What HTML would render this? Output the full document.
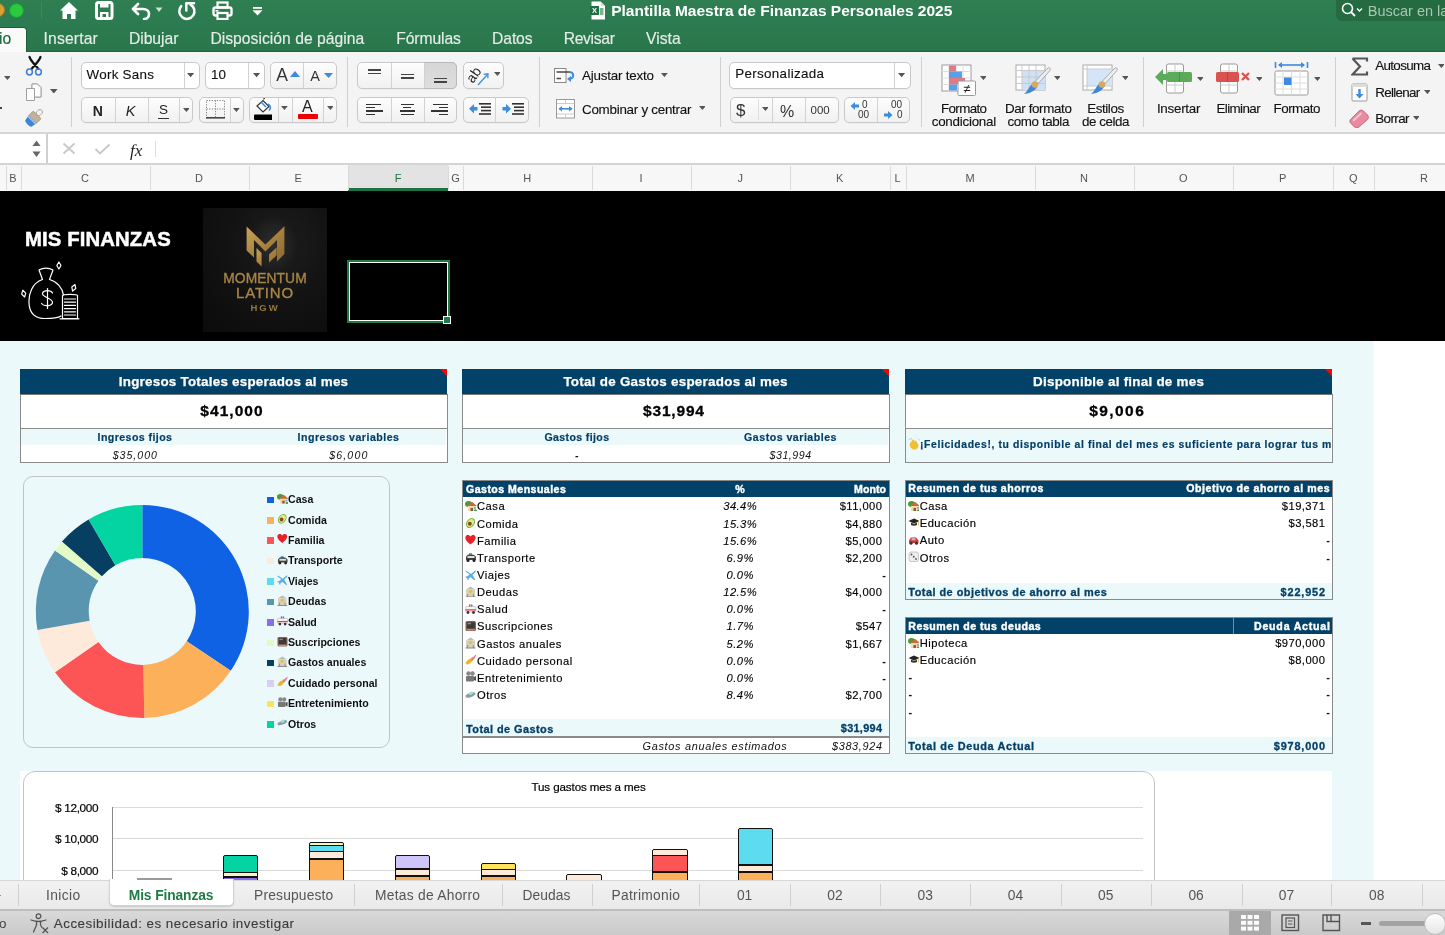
<!DOCTYPE html><html><head><meta charset="utf-8"><style>
html,body{margin:0;padding:0;}
body{width:1445px;height:935px;position:relative;overflow:hidden;background:#fff;font-family:"Liberation Sans",sans-serif;}
div{position:absolute;box-sizing:border-box;}
.t{white-space:nowrap;}
</style></head><body><div style="left:0;top:0;width:1445px;height:935px;overflow:hidden;will-change:transform">
<div style="left:0px;top:0px;width:1445px;height:52px;background:linear-gradient(#2f7f53,#2a764c);"></div>
<div style="left:0px;top:51px;width:1445px;height:1px;background:#1f643b;"></div>
<div style="left:-9px;top:3px;width:14px;height:14px;border-radius:50%;background:#d8a031;border:1px solid #b07c20"></div>
<div style="left:9px;top:3px;width:15px;height:15px;border-radius:50%;background:#2ac940;border:1px solid #1e9a30"></div>
<div style="left:41px;top:2px;width:1px;height:17px;background:#3c8a5c;"></div>
<svg style="position:absolute;left:59px;top:1px;" width="20" height="19" viewBox="0 0 20 19"><path d="M10 1 L19 9.5 L16.5 9.5 L16.5 18 L12 18 L12 13 L8 13 L8 18 L3.5 18 L3.5 9.5 L1 9.5 Z" fill="#fff"/><path d="M10 4.5 L5.5 8.7 L14.5 8.7Z" fill="#2d7b4f" opacity="0"/></svg>
<svg style="position:absolute;left:95px;top:1px;" width="19" height="19" viewBox="0 0 19 19"><rect x="1.5" y="1.5" width="15.5" height="16" rx="2" fill="none" stroke="#fff" stroke-width="3"/><rect x="5" y="1.5" width="8.5" height="5" fill="#fff"/><rect x="5" y="11" width="8.5" height="6.5" fill="#fff"/><rect x="7.5" y="13" width="3.5" height="3" fill="#2d7b4f"/></svg>
<svg style="position:absolute;left:130px;top:1px;" width="22" height="19" viewBox="0 0 22 19"><path d="M3 8 L8 3 M3 8 L8 13 M3 8 L13 8 C17 8 19 10.5 19 13 C19 16 17 18 14 18" fill="none" stroke="#fff" stroke-width="2.6" stroke-linecap="round" stroke-linejoin="round"/></svg>
<svg style="position:absolute;left:155px;top:7px;" width="8" height="6" viewBox="0 0 8 6"><path d="M0.5 0.5 L7.5 0.5 L4 5Z" fill="#d0e0d4"/></svg>
<svg style="position:absolute;left:176px;top:0px;" width="22" height="21" viewBox="0 0 22 21"><path d="M5.2 6.2 A7.6 7.6 0 1 0 14.5 4.6" fill="none" stroke="#fff" stroke-width="2.5" stroke-linecap="round"/><path d="M10.3 10.5 V3.2 H18" fill="none" stroke="#fff" stroke-width="2.5" stroke-linecap="round" stroke-linejoin="round"/></svg>
<svg style="position:absolute;left:212px;top:1px;" width="21" height="19" viewBox="0 0 21 19"><rect x="5.5" y="1.5" width="10" height="5" fill="none" stroke="#fff" stroke-width="2.2"/><rect x="1.5" y="6.5" width="18" height="8" rx="2" fill="none" stroke="#fff" stroke-width="2.4"/><rect x="5.5" y="12" width="10" height="6" fill="#2d7b4f" stroke="#fff" stroke-width="2.2"/><rect x="3.5" y="9" width="3" height="1.6" fill="#fff"/></svg>
<svg style="position:absolute;left:252px;top:6px;" width="11" height="11" viewBox="0 0 11 11"><rect x="1" y="1" width="9" height="1.8" fill="#fff"/><path d="M0.5 4.2 L10.5 4.2 L5.5 9.5Z" fill="#fff"/></svg>
<svg style="position:absolute;left:590px;top:1px;" width="16" height="19" viewBox="0 0 16 19"><path d="M1.5 0.5 L10.5 0.5 L15 5 L15 18.5 L1.5 18.5Z" fill="#fff"/><path d="M10.5 0.5 L10.5 5 L15 5" fill="#ddd"/><rect x="0" y="5" width="9" height="9" fill="#1e7145"/><text x="4.5" y="12" font-size="7.5" font-weight="bold" fill="#fff" text-anchor="middle" font-family="Liberation Sans">X</text><rect x="10" y="7" width="3.5" height="7" fill="#7bb38f"/></svg>
<div class="t" style="left:611.20px;top:3.00px;font-size:15.5px;line-height:15.5px;color:#fff;font-weight:bold;">Plantilla Maestra de Finanzas Personales 2025</div>
<div style="left:1336px;top:-6px;width:120px;height:27px;border-radius:6px;background:#256b42"></div>
<svg style="position:absolute;left:1341px;top:2px;" width="24" height="16" viewBox="0 0 24 16"><circle cx="6.5" cy="6.5" r="5" fill="none" stroke="#fff" stroke-width="1.6"/><path d="M10 10 L14 14" stroke="#fff" stroke-width="1.8"/><path d="M16 6.5 L18.5 9 L21 6.5" fill="none" stroke="#fff" stroke-width="1.3"/></svg>
<div class="t" style="left:1367.80px;top:4.00px;font-size:14.5px;line-height:14.5px;color:#a9c6b2;">Buscar en la</div>
<div style="left:-5px;top:26.5px;width:32px;height:27px;background:#fafafa;border:1px solid #1b6038;border-bottom:none;border-radius:4px 4px 0 0"></div>
<div style="left:-5px;top:52px;width:32px;height:1px;background:#f6f6f6;"></div>
<div class="t" style="left:-1.00px;top:31.00px;font-size:15.7px;line-height:15.7px;color:#1d6b3d;-webkit-text-stroke:0.15px #1d6b3d;">io</div>
<div class="t" style="left:43.50px;top:31.00px;font-size:15.7px;line-height:15.7px;color:#e4ede6;-webkit-text-stroke:0.15px #e4ede6;letter-spacing:0.154px;">Insertar</div>
<div class="t" style="left:129.00px;top:31.00px;font-size:15.7px;line-height:15.7px;color:#e4ede6;-webkit-text-stroke:0.15px #e4ede6;letter-spacing:-0.056px;">Dibujar</div>
<div class="t" style="left:210.40px;top:31.00px;font-size:15.7px;line-height:15.7px;color:#e4ede6;-webkit-text-stroke:0.15px #e4ede6;letter-spacing:0.020px;">Disposición de página</div>
<div class="t" style="left:396.20px;top:31.00px;font-size:15.7px;line-height:15.7px;color:#e4ede6;-webkit-text-stroke:0.15px #e4ede6;letter-spacing:-0.090px;">Fórmulas</div>
<div class="t" style="left:492.10px;top:31.00px;font-size:15.7px;line-height:15.7px;color:#e4ede6;-webkit-text-stroke:0.15px #e4ede6;letter-spacing:-0.128px;">Datos</div>
<div class="t" style="left:563.70px;top:31.00px;font-size:15.7px;line-height:15.7px;color:#e4ede6;-webkit-text-stroke:0.15px #e4ede6;letter-spacing:-0.320px;">Revisar</div>
<div class="t" style="left:646.00px;top:31.00px;font-size:15.7px;line-height:15.7px;color:#e4ede6;-webkit-text-stroke:0.15px #e4ede6;letter-spacing:0.020px;">Vista</div>
<div style="left:0px;top:52px;width:1445px;height:81px;background:#f4f4f4;"></div>
<div style="left:0px;top:132px;width:1445px;height:2px;background:#d6d6d6;"></div>
<svg style="position:absolute;left:3.6px;top:76.46px;" width="6.8" height="4.08" viewBox="0 0 6.8 4.08"><path d="M0 0 L6.8 0 L3.4 4.08Z" fill="#555"/></svg>
<div style="left:0px;top:107px;width:2px;height:2px;background:#444;"></div>
<svg style="position:absolute;left:24px;top:55px;" width="22" height="24" viewBox="0 0 22 24"><path d="M5.5 2 C7 6 10 9 14.5 14 M16.5 2 C15 6 12 9 7.5 14" fill="none" stroke="#111" stroke-width="2.2" stroke-linecap="round"/><circle cx="5.5" cy="17" r="2.9" fill="none" stroke="#3b7fd9" stroke-width="1.5"/><circle cx="14.5" cy="17" r="2.9" fill="none" stroke="#3b7fd9" stroke-width="1.5"/></svg>
<svg style="position:absolute;left:25px;top:83px;" width="18" height="20" viewBox="0 0 18 20"><path d="M7 1 L12.5 1 L16 4.5 L16 14 L7 14Z" fill="#fff" stroke="#a0a0a0" stroke-width="1"/><path d="M1.5 5.5 L9.5 5.5 L9.5 17.5 L1.5 17.5Z" fill="#fff" stroke="#a0a0a0" stroke-width="1"/><path d="M7 1 L12.5 1 L16 4.5 L16 14 L9.5 14 L9.5 5.5 L7 5.5Z" fill="#fff" stroke="#a0a0a0" stroke-width="1"/></svg>
<svg style="position:absolute;left:50.2px;top:88.72px;" width="7.6" height="4.56" viewBox="0 0 7.6 4.56"><path d="M0 0 L7.6 0 L3.8 4.56Z" fill="#555"/></svg>
<svg style="position:absolute;left:23px;top:108px;" width="22" height="20" viewBox="0 0 22 20"><g transform="rotate(45 11 10)"><rect x="8.5" y="-1" width="5" height="7" rx="2.5" fill="#f2f2f2" stroke="#9a9a9a" stroke-width="0.8"/><rect x="5.5" y="5.5" width="11" height="6.5" rx="1" fill="#c2b29a" stroke="#8a7a66" stroke-width="0.6"/><path d="M5.5 12 H16.5 L15.5 18 C13 19.5 9 19.5 6.5 18Z" fill="#3a86d8"/><path d="M5.5 12 H16.5 V13.8 H5.5Z" fill="#9ac0ea"/></g></svg>
<div style="left:71px;top:57px;width:1px;height:70px;background:#d0d0d0;"></div>
<div style="left:81px;top:62px;width:119px;height:27px;border:1px solid #c9c9c9;border-radius:5px;background:#fff;box-shadow:0 0.5px 0.5px rgba(0,0,0,0.06)"></div>
<div style="left:184px;top:63px;width:1px;height:25px;background:#d2d2d2;"></div>
<div class="t" style="left:86.50px;top:68.00px;font-size:13.4px;line-height:13.4px;color:#111;-webkit-text-stroke:0.12px #111;letter-spacing:0.277px;">Work Sans</div>
<svg style="position:absolute;left:187.4px;top:73.34px;" width="7.2" height="4.32" viewBox="0 0 7.2 4.32"><path d="M0 0 L7.2 0 L3.6 4.32Z" fill="#555"/></svg>
<div style="left:205px;top:62px;width:60px;height:27px;border:1px solid #c9c9c9;border-radius:5px;background:#fff;box-shadow:0 0.5px 0.5px rgba(0,0,0,0.06)"></div>
<div style="left:248px;top:63px;width:1px;height:25px;background:#d2d2d2;"></div>
<div class="t" style="left:211.00px;top:68.00px;font-size:13.4px;line-height:13.4px;color:#111;-webkit-text-stroke:0.12px #111;">10</div>
<svg style="position:absolute;left:253.4px;top:73.34px;" width="7.2" height="4.32" viewBox="0 0 7.2 4.32"><path d="M0 0 L7.2 0 L3.6 4.32Z" fill="#555"/></svg>
<div style="left:270px;top:62px;width:67px;height:27px;border:1px solid #c9c9c9;border-radius:5px;background:linear-gradient(#fdfdfd,#f1f1f1);box-shadow:0 0.5px 0.5px rgba(0,0,0,0.06)"></div>
<div style="left:303px;top:63px;width:1px;height:25px;background:#d2d2d2;"></div>
<div class="t" style="left:276.30px;top:67.00px;font-size:17.5px;line-height:17.5px;color:#333;">A</div>
<svg style="position:absolute;left:290px;top:71px;" width="10" height="6" viewBox="0 0 10 6"><path d="M0 6 L10 6 L5 0Z" fill="#3d8ae0"/></svg>
<div class="t" style="left:310.30px;top:69.00px;font-size:14.5px;line-height:14.5px;color:#333;">A</div>
<svg style="position:absolute;left:323.5px;top:73px;" width="9" height="5" viewBox="0 0 9 5"><path d="M0 0 L9 0 L4.5 5Z" fill="#3d8ae0"/></svg>
<div style="left:81px;top:97px;width:112px;height:26px;border:1px solid #c9c9c9;border-radius:5px;background:linear-gradient(#fdfdfd,#f1f1f1);box-shadow:0 0.5px 0.5px rgba(0,0,0,0.06)"></div>
<div style="left:114.5px;top:98px;width:1px;height:24px;background:#d2d2d2;"></div>
<div style="left:147.5px;top:98px;width:1px;height:24px;background:#d2d2d2;"></div>
<div style="left:179px;top:98px;width:1px;height:24px;background:#d2d2d2;"></div>
<div class="t" style="left:92.64px;top:104.00px;font-size:14px;line-height:14px;color:#222;font-weight:bold;">N</div>
<div class="t" style="left:125.66px;top:104.00px;font-size:14.5px;line-height:14.5px;color:#222;font-style:italic;">K</div>
<div class="t" style="left:159.00px;top:103.00px;font-size:13.5px;line-height:13.5px;color:#222;">S</div>
<div style="left:158px;top:117.5px;width:11px;height:1.5px;background:#333;"></div>
<svg style="position:absolute;left:182.6px;top:108.46px;" width="6.8" height="4.08" viewBox="0 0 6.8 4.08"><path d="M0 0 L6.8 0 L3.4 4.08Z" fill="#555"/></svg>
<div style="left:198.5px;top:96.5px;width:45.0px;height:26.0px;border:1px solid #c9c9c9;border-radius:5px;background:linear-gradient(#fdfdfd,#f1f1f1);box-shadow:0 0.5px 0.5px rgba(0,0,0,0.06)"></div>
<div style="left:229.5px;top:97.5px;width:1px;height:24.0px;background:#d2d2d2;"></div>
<svg style="position:absolute;left:205px;top:99px;" width="21" height="21" viewBox="0 0 21 21"><g stroke="#888" stroke-width="1" stroke-dasharray="1.3 1.3" fill="none"><rect x="1.5" y="1.5" width="18" height="17"/><path d="M10.5 1.5 V18.5 M1.5 10 H19.5"/></g><rect x="1" y="18" width="19" height="1.6" fill="#444"/></svg>
<svg style="position:absolute;left:233.1px;top:108.46px;" width="6.8" height="4.08" viewBox="0 0 6.8 4.08"><path d="M0 0 L6.8 0 L3.4 4.08Z" fill="#555"/></svg>
<div style="left:249px;top:96.5px;width:88px;height:26.0px;border:1px solid #c9c9c9;border-radius:5px;background:linear-gradient(#fdfdfd,#f1f1f1);box-shadow:0 0.5px 0.5px rgba(0,0,0,0.06)"></div>
<div style="left:278px;top:97.5px;width:1px;height:24.0px;background:#d2d2d2;"></div>
<div style="left:291.5px;top:97.5px;width:1px;height:24.0px;background:#d2d2d2;"></div>
<div style="left:323px;top:97.5px;width:1px;height:24.0px;background:#d2d2d2;"></div>
<svg style="position:absolute;left:254px;top:98px;" width="18" height="22" viewBox="0 0 18 22"><path d="M3 8 L9 2.5 L15 8.5 L9 14Z" fill="#fff" stroke="#333" stroke-width="1.2"/><path d="M7 4 L12 9" stroke="#3b8de0" stroke-width="1.6"/><path d="M14 6 C17 8 17 11 15 12.5" fill="none" stroke="#3b8de0" stroke-width="1.6"/><path d="M9 1 L11 0.5" stroke="#333" stroke-width="1"/><rect x="0" y="16.5" width="20" height="5.5" rx="1" fill="#000"/></svg>
<svg style="position:absolute;left:281.1px;top:106.46px;" width="6.8" height="4.08" viewBox="0 0 6.8 4.08"><path d="M0 0 L6.8 0 L3.4 4.08Z" fill="#555"/></svg>
<div class="t" style="left:302.00px;top:99.00px;font-size:16px;line-height:16px;color:#222;">A</div>
<div style="left:297.7px;top:114.3px;width:20.3px;height:5px;background:#ee0000;border-radius:1px"></div>
<svg style="position:absolute;left:326.6px;top:106.46px;" width="6.8" height="4.08" viewBox="0 0 6.8 4.08"><path d="M0 0 L6.8 0 L3.4 4.08Z" fill="#555"/></svg>
<div style="left:347px;top:57px;width:1px;height:70px;background:#d0d0d0;"></div>
<div style="left:357px;top:62px;width:100px;height:27px;border:1px solid #c9c9c9;border-radius:5px;background:linear-gradient(#fdfdfd,#f1f1f1);box-shadow:0 0.5px 0.5px rgba(0,0,0,0.06)"></div>
<div style="left:423.7px;top:62px;width:33.30000000000001px;height:27px;border:1px solid #b9b9b9;border-radius:0 5px 5px 0;background:linear-gradient(#d6d6d6,#dedede)"></div>
<div style="left:390.5px;top:63px;width:1px;height:25px;background:#d2d2d2;"></div>
<div style="left:423.7px;top:63px;width:1px;height:25px;background:#d2d2d2;"></div>
<div style="left:367.5px;top:69px;width:13px;height:1.6px;background:#444;"></div>
<div style="left:367.5px;top:72.5px;width:13px;height:1.6px;background:#444;"></div>
<div style="left:400.5px;top:73.5px;width:13px;height:1.6px;background:#444;"></div>
<div style="left:400.5px;top:77.0px;width:13px;height:1.6px;background:#444;"></div>
<div style="left:433.5px;top:77.5px;width:13px;height:1.6px;background:#444;"></div>
<div style="left:433.5px;top:81.0px;width:13px;height:1.6px;background:#444;"></div>
<div style="left:462.5px;top:62px;width:41.5px;height:27px;border:1px solid #c9c9c9;border-radius:5px;background:linear-gradient(#fdfdfd,#f1f1f1);box-shadow:0 0.5px 0.5px rgba(0,0,0,0.06)"></div>
<svg style="position:absolute;left:467px;top:64px;" width="26" height="24" viewBox="0 0 26 24"><text x="0" y="0" font-size="14" font-family="Liberation Sans" fill="#222" transform="translate(6,20) rotate(-55)">ab</text><path d="M11 21 L20.5 10.5" stroke="#3b8de0" stroke-width="1.3"/><path d="M16.5 10.3 L21 9.8 L20.8 14.3" fill="none" stroke="#3b8de0" stroke-width="1.3"/></svg>
<svg style="position:absolute;left:493.6px;top:72.46px;" width="6.8" height="4.08" viewBox="0 0 6.8 4.08"><path d="M0 0 L6.8 0 L3.4 4.08Z" fill="#555"/></svg>
<div style="left:357px;top:96.5px;width:100px;height:26.0px;border:1px solid #c9c9c9;border-radius:5px;background:linear-gradient(#fdfdfd,#f1f1f1);box-shadow:0 0.5px 0.5px rgba(0,0,0,0.06)"></div>
<div style="left:390.5px;top:97.5px;width:1px;height:24.0px;background:#d2d2d2;"></div>
<div style="left:423.7px;top:97.5px;width:1px;height:24.0px;background:#d2d2d2;"></div>
<div style="left:366px;top:103.5px;width:15px;height:1.6px;background:#333;"></div>
<div style="left:366px;top:106.9px;width:9px;height:1.6px;background:#333;"></div>
<div style="left:366px;top:110.3px;width:17px;height:1.6px;background:#333;"></div>
<div style="left:366px;top:113.7px;width:9px;height:1.6px;background:#333;"></div>
<div style="left:400.5px;top:103.5px;width:13px;height:1.6px;background:#333;"></div>
<div style="left:403.0px;top:106.9px;width:8px;height:1.6px;background:#333;"></div>
<div style="left:399.5px;top:110.3px;width:15px;height:1.6px;background:#333;"></div>
<div style="left:400.5px;top:113.7px;width:13px;height:1.6px;background:#333;"></div>
<div style="left:433px;top:103.5px;width:15px;height:1.6px;background:#333;"></div>
<div style="left:439px;top:106.9px;width:9px;height:1.6px;background:#333;"></div>
<div style="left:431px;top:110.3px;width:17px;height:1.6px;background:#333;"></div>
<div style="left:439px;top:113.7px;width:9px;height:1.6px;background:#333;"></div>
<div style="left:462.5px;top:96.5px;width:66.5px;height:26.0px;border:1px solid #c9c9c9;border-radius:5px;background:linear-gradient(#fdfdfd,#f1f1f1);box-shadow:0 0.5px 0.5px rgba(0,0,0,0.06)"></div>
<div style="left:495.4px;top:97.5px;width:1px;height:24.0px;background:#d2d2d2;"></div>
<svg style="position:absolute;left:468px;top:102px;" width="24" height="14" viewBox="0 0 24 14"><path d="M1 6.8 L6 2 L6 5 L9.5 5 L9.5 8.6 L6 8.6 L6 11.6Z" fill="#3b8de0"/><g fill="#333"><rect x="11" y="1" width="12" height="1.6"/><rect x="13" y="4.4" width="10" height="1.6"/><rect x="13" y="7.8" width="10" height="1.6"/><rect x="11" y="11.2" width="12" height="1.6"/></g></svg>
<svg style="position:absolute;left:501px;top:102px;" width="24" height="14" viewBox="0 0 24 14"><path d="M10 6.8 L5 2 L5 5 L1.5 5 L1.5 8.6 L5 8.6 L5 11.6Z" fill="#3b8de0"/><g fill="#333"><rect x="11" y="1" width="12" height="1.6"/><rect x="13" y="4.4" width="10" height="1.6"/><rect x="13" y="7.8" width="10" height="1.6"/><rect x="11" y="11.2" width="12" height="1.6"/></g></svg>
<div style="left:539px;top:57px;width:1px;height:70px;background:#d0d0d0;"></div>
<svg style="position:absolute;left:554px;top:68px;" width="24" height="16" viewBox="0 0 24 16"><rect x="0.5" y="0.5" width="11.5" height="14" fill="#fff" stroke="#888"/><path d="M2.5 4 H15 M2.5 10.5 H7" stroke="#444" stroke-width="1.3"/><path d="M15 4 C20 4 21 10 15.5 11" fill="none" stroke="#3b8de0" stroke-width="2"/><path d="M13 11 L17 8 L17 14Z" fill="#3b8de0"/></svg>
<div class="t" style="left:582.00px;top:69.00px;font-size:13.4px;line-height:13.4px;color:#111;-webkit-text-stroke:0.12px #111;letter-spacing:-0.206px;">Ajustar texto</div>
<svg style="position:absolute;left:661.1px;top:72.75999999999999px;" width="6.8" height="4.08" viewBox="0 0 6.8 4.08"><path d="M0 0 L6.8 0 L3.4 4.08Z" fill="#555"/></svg>
<svg style="position:absolute;left:556px;top:99px;" width="19" height="20" viewBox="0 0 19 20"><rect x="0.5" y="0.5" width="18" height="18.5" fill="#fff" stroke="#999"/><path d="M9.5 1 V4.5 M9.5 15 V19 M1 4.5 H18 M1 15 H18" stroke="#ccc" stroke-width="1"/><path d="M3 9.8 H16" stroke="#3b8de0" stroke-width="1.6"/><path d="M2.5 9.8 L6 7 L6 12.6Z M16.5 9.8 L13 7 L13 12.6Z" fill="#3b8de0"/></svg>
<div class="t" style="left:582.00px;top:103.00px;font-size:13.4px;line-height:13.4px;color:#111;-webkit-text-stroke:0.12px #111;letter-spacing:-0.261px;">Combinar y centrar</div>
<svg style="position:absolute;left:698.6px;top:106.46px;" width="6.8" height="4.08" viewBox="0 0 6.8 4.08"><path d="M0 0 L6.8 0 L3.4 4.08Z" fill="#555"/></svg>
<div style="left:720px;top:57px;width:1px;height:70px;background:#d0d0d0;"></div>
<div style="left:729px;top:62px;width:182px;height:27px;border:1px solid #c9c9c9;border-radius:5px;background:#fff;box-shadow:0 0.5px 0.5px rgba(0,0,0,0.06)"></div>
<div style="left:894px;top:63px;width:1px;height:25px;background:#d2d2d2;"></div>
<div class="t" style="left:735.30px;top:67.00px;font-size:13.4px;line-height:13.4px;color:#111;-webkit-text-stroke:0.12px #111;letter-spacing:0.315px;">Personalizada</div>
<svg style="position:absolute;left:898.4px;top:73.34px;" width="7.2" height="4.32" viewBox="0 0 7.2 4.32"><path d="M0 0 L7.2 0 L3.6 4.32Z" fill="#555"/></svg>
<div style="left:729.5px;top:97px;width:109.0px;height:25.5px;border:1px solid #c9c9c9;border-radius:5px;background:linear-gradient(#fdfdfd,#f1f1f1);box-shadow:0 0.5px 0.5px rgba(0,0,0,0.06)"></div>
<div style="left:771.7px;top:98px;width:1px;height:23.5px;background:#d2d2d2;"></div>
<div style="left:804.8px;top:98px;width:1px;height:23.5px;background:#d2d2d2;"></div>
<div style="left:758px;top:99px;width:1px;height:21px;background:#dedede;"></div>
<div class="t" style="left:736.00px;top:102.00px;font-size:17px;line-height:17px;color:#333;">$</div>
<svg style="position:absolute;left:761.6px;top:107.46px;" width="6.8" height="4.08" viewBox="0 0 6.8 4.08"><path d="M0 0 L6.8 0 L3.4 4.08Z" fill="#555"/></svg>
<div class="t" style="left:780.00px;top:104.00px;font-size:16px;line-height:16px;color:#333;">%</div>
<div class="t" style="left:810.50px;top:105.00px;font-size:11.5px;line-height:11.5px;color:#333;">000</div>
<div style="left:843.5px;top:97px;width:66.0px;height:25.5px;border:1px solid #c9c9c9;border-radius:5px;background:linear-gradient(#fdfdfd,#f1f1f1);box-shadow:0 0.5px 0.5px rgba(0,0,0,0.06)"></div>
<div style="left:876.6px;top:98px;width:1px;height:23.5px;background:#d2d2d2;"></div>
<svg style="position:absolute;left:850px;top:101px;" width="10" height="10" viewBox="0 0 10 10"><path d="M0.5 5 L5 1 L5 3.5 L9 3.5 L9 6.5 L5 6.5 L5 9Z" fill="#3b8de0"/></svg>
<div class="t" style="left:862.00px;top:100.00px;font-size:10px;line-height:10px;color:#333;">0</div>
<div class="t" style="left:858.00px;top:110.00px;font-size:10px;line-height:10px;color:#333;">00</div>
<div class="t" style="left:891.00px;top:100.00px;font-size:10px;line-height:10px;color:#333;">00</div>
<div class="t" style="left:897.00px;top:110.00px;font-size:10px;line-height:10px;color:#333;">0</div>
<svg style="position:absolute;left:883px;top:110px;" width="10" height="10" viewBox="0 0 10 10"><path d="M9.5 5 L5 1 L5 3.5 L1 3.5 L1 6.5 L5 6.5 L5 9Z" fill="#3b8de0"/></svg>
<div style="left:921px;top:57px;width:1px;height:70px;background:#d0d0d0;"></div>
<svg style="position:absolute;left:941px;top:64px;" width="36" height="32" viewBox="0 0 36 32"><rect x="1" y="1" width="29" height="26" fill="#fff" stroke="#999"/><g stroke="#ddd"><path d="M8 1 V27 M15 1 V27 M22 1 V27 M1 7.5 H30 M1 14 H30 M1 20.5 H30"/></g><rect x="8" y="1.5" width="7" height="6" fill="#e07b85"/><rect x="8" y="7.5" width="13" height="6.5" fill="#5aa0e6"/><rect x="8" y="14" width="16" height="6.5" fill="#e07b85"/><rect x="8" y="20.5" width="8" height="6" fill="#5aa0e6"/><rect x="17" y="17" width="17.5" height="14.5" rx="1" fill="#fff" stroke="#999"/><text x="25.8" y="29" font-size="13" text-anchor="middle" fill="#222" font-family="Liberation Sans">≠</text></svg>
<svg style="position:absolute;left:979.6px;top:75.96px;" width="6.8" height="4.08" viewBox="0 0 6.8 4.08"><path d="M0 0 L6.8 0 L3.4 4.08Z" fill="#555"/></svg>
<div class="t" style="left:941.00px;top:102.00px;font-size:13.4px;line-height:13.4px;color:#111;-webkit-text-stroke:0.12px #111;letter-spacing:-0.648px;">Formato</div>
<div class="t" style="left:931.70px;top:115.00px;font-size:13.4px;line-height:13.4px;color:#111;-webkit-text-stroke:0.12px #111;letter-spacing:-0.245px;">condicional</div>
<div class="t" style="left:1004.90px;top:102.00px;font-size:13.4px;line-height:13.4px;color:#111;-webkit-text-stroke:0.12px #111;letter-spacing:-0.374px;">Dar formato</div>
<div class="t" style="left:1007.40px;top:115.00px;font-size:13.4px;line-height:13.4px;color:#111;-webkit-text-stroke:0.12px #111;letter-spacing:-0.394px;">como tabla</div>
<div class="t" style="left:1087.20px;top:102.00px;font-size:13.4px;line-height:13.4px;color:#111;-webkit-text-stroke:0.12px #111;letter-spacing:-0.411px;">Estilos</div>
<div class="t" style="left:1081.95px;top:115.00px;font-size:13.4px;line-height:13.4px;color:#111;-webkit-text-stroke:0.12px #111;letter-spacing:-0.452px;">de celda</div>
<svg style="position:absolute;left:1015px;top:64px;" width="38" height="32" viewBox="0 0 38 32"><rect x="1" y="1" width="29" height="25" fill="#fff" stroke="#aaa"/><rect x="7" y="6.5" width="23" height="19.5" fill="#cfe1f7"/><g stroke="#c9c9c9"><path d="M7 1 V26 M14 1 V26 M21 1 V26 M1 6.5 H30 M1 13 H30 M1 19.5 H30"/></g><path d="M33 4 C35 3 36 5 34.5 7 L22 21 L19 18.5 Z" fill="#eee" stroke="#999" stroke-width="0.8"/><path d="M19 18 L22.5 21.5 C21 26 17 29 9 30 C13 27 14 22 19 18Z" fill="#3f86dc"/><circle cx="20" cy="20.5" r="3.3" fill="#d7a95f"/></svg>
<svg style="position:absolute;left:1053.6px;top:75.96px;" width="6.8" height="4.08" viewBox="0 0 6.8 4.08"><path d="M0 0 L6.8 0 L3.4 4.08Z" fill="#555"/></svg>
<svg style="position:absolute;left:1082px;top:64px;" width="38" height="32" viewBox="0 0 38 32"><rect x="1" y="1" width="29" height="25" fill="#fff" stroke="#aaa"/><rect x="5" y="5" width="25" height="17" fill="#d5e5f8"/><g stroke="#c9c9c9"><path d="M5 1 V26 M1 5 H30 M1 22 H30"/></g><path d="M33 4 C35 3 36 5 34.5 7 L22 21 L19 18.5 Z" fill="#eee" stroke="#999" stroke-width="0.8"/><path d="M19 18 L22.5 21.5 C21 26 17 29 9 30 C13 27 14 22 19 18Z" fill="#3f86dc"/><circle cx="20" cy="20.5" r="3.3" fill="#d7a95f"/></svg>
<svg style="position:absolute;left:1121.6px;top:75.96px;" width="6.8" height="4.08" viewBox="0 0 6.8 4.08"><path d="M0 0 L6.8 0 L3.4 4.08Z" fill="#555"/></svg>
<div style="left:1143px;top:57px;width:1px;height:70px;background:#d0d0d0;"></div>
<svg style="position:absolute;left:1154px;top:63px;" width="40" height="32" viewBox="0 0 40 32"><rect x="12.5" y="1" width="17" height="29" rx="2" fill="#fff" stroke="#999"/><path d="M21 1 V30 M12.5 8 H29.5 M12.5 22 H29.5" stroke="#ccc"/><rect x="13" y="9" width="25" height="10" rx="1.5" fill="#5cab5a"/><path d="M25.5 9 V19" stroke="#4a914a"/><path d="M1 14 L9 6 L9 22Z" fill="#5cab5a"/><rect x="8" y="11" width="6" height="6" fill="#5cab5a"/></svg>
<svg style="position:absolute;left:1196.6px;top:77.46px;" width="6.8" height="4.08" viewBox="0 0 6.8 4.08"><path d="M0 0 L6.8 0 L3.4 4.08Z" fill="#555"/></svg>
<svg style="position:absolute;left:1215px;top:63px;" width="38" height="32" viewBox="0 0 38 32"><rect x="5.5" y="1" width="17" height="29" rx="2" fill="#fff" stroke="#999"/><path d="M14 1 V30 M5.5 8 H22.5 M5.5 22 H22.5" stroke="#ccc"/><rect x="1" y="9" width="23" height="10" rx="1.5" fill="#d9534f"/><path d="M12.5 9 V19" stroke="#b94440"/><path d="M27 10 L34 17 M34 10 L27 17" stroke="#d9534f" stroke-width="2.4"/></svg>
<svg style="position:absolute;left:1255.6px;top:77.46px;" width="6.8" height="4.08" viewBox="0 0 6.8 4.08"><path d="M0 0 L6.8 0 L3.4 4.08Z" fill="#555"/></svg>
<svg style="position:absolute;left:1274px;top:60px;" width="36" height="36" viewBox="0 0 36 36"><path d="M1.5 2 V8 M33.5 2 V8" stroke="#3d8ae0" stroke-width="1.6"/><path d="M5 5 H30" stroke="#3d8ae0" stroke-width="1.6"/><path d="M4 5 L8 2 L8 8Z M31 5 L27 2 L27 8Z" fill="#3d8ae0"/><rect x="1" y="11" width="33" height="24" rx="1.5" fill="#fff" stroke="#999"/><path d="M1 17 H34 M1 23 H34 M1 29 H34 M9 11 V35 M17.5 11 V35 M26 11 V35" stroke="#ddd"/><rect x="10" y="17.5" width="7.5" height="7.5" fill="#3d8ae0"/></svg>
<svg style="position:absolute;left:1313.6px;top:77.46px;" width="6.8" height="4.08" viewBox="0 0 6.8 4.08"><path d="M0 0 L6.8 0 L3.4 4.08Z" fill="#555"/></svg>
<div class="t" style="left:1156.90px;top:102.00px;font-size:13.4px;line-height:13.4px;color:#111;-webkit-text-stroke:0.12px #111;letter-spacing:-0.261px;">Insertar</div>
<div class="t" style="left:1216.40px;top:102.00px;font-size:13.4px;line-height:13.4px;color:#111;-webkit-text-stroke:0.12px #111;letter-spacing:-0.586px;">Eliminar</div>
<div class="t" style="left:1273.50px;top:102.00px;font-size:13.4px;line-height:13.4px;color:#111;-webkit-text-stroke:0.12px #111;letter-spacing:-0.498px;">Formato</div>
<div style="left:1335px;top:57px;width:1px;height:70px;background:#d0d0d0;"></div>
<svg style="position:absolute;left:1351px;top:57px;" width="18" height="19" viewBox="0 0 18 19"><path d="M1.5 1.5 H16 V4.5 M1.5 1.5 L9 9.5 L1.5 17.5 H16 V14.5" fill="none" stroke="#555" stroke-width="2.2" stroke-linejoin="miter"/></svg>
<div class="t" style="left:1375.20px;top:59.00px;font-size:13.4px;line-height:13.4px;color:#111;-webkit-text-stroke:0.12px #111;letter-spacing:-0.647px;">Autosuma</div>
<svg style="position:absolute;left:1437.6px;top:63.96px;" width="6.8" height="4.08" viewBox="0 0 6.8 4.08"><path d="M0 0 L6.8 0 L3.4 4.08Z" fill="#555"/></svg>
<svg style="position:absolute;left:1351px;top:83px;" width="18" height="19" viewBox="0 0 18 19"><rect x="1" y="1" width="15" height="17" rx="1" fill="#fff" stroke="#999"/><rect x="1" y="1" width="15" height="3" fill="#ddd"/><path d="M8.5 6 V13" stroke="#3d8ae0" stroke-width="2.4"/><path d="M4.5 11 L12.5 11 L8.5 15.5Z" fill="#3d8ae0"/></svg>
<div class="t" style="left:1375.20px;top:86.00px;font-size:13.4px;line-height:13.4px;color:#111;-webkit-text-stroke:0.12px #111;letter-spacing:-0.701px;">Rellenar</div>
<svg style="position:absolute;left:1423.6px;top:89.96px;" width="6.8" height="4.08" viewBox="0 0 6.8 4.08"><path d="M0 0 L6.8 0 L3.4 4.08Z" fill="#555"/></svg>
<svg style="position:absolute;left:1349px;top:109px;" width="22" height="19" viewBox="0 0 22 19"><path d="M1 11 L10 2 C11.5 0.8 13 0.8 14.5 2 L18.5 6 C19.7 7.5 19.7 9 18.5 10.5 L10 18 C8.5 19.2 7 19.2 5.5 18 L2 14.5 C0.8 13.5 0.8 12 1 11Z" fill="#e98aa0" stroke="#b85870" stroke-width="0.8"/><path d="M4 12 L12.5 4" stroke="#f6c3cf" stroke-width="2"/></svg>
<div class="t" style="left:1375.20px;top:112.00px;font-size:13.4px;line-height:13.4px;color:#111;-webkit-text-stroke:0.12px #111;letter-spacing:-0.566px;">Borrar</div>
<svg style="position:absolute;left:1412.6px;top:115.96px;" width="6.8" height="4.08" viewBox="0 0 6.8 4.08"><path d="M0 0 L6.8 0 L3.4 4.08Z" fill="#555"/></svg>
<div style="left:0px;top:134px;width:1445px;height:30px;background:#fff;"></div>
<div style="left:0px;top:163px;width:1445px;height:2px;background:#d4d4d4;"></div>
<div style="left:46px;top:134px;width:1.5px;height:29px;background:#d0d0d0;"></div>
<svg style="position:absolute;left:32px;top:140px;" width="10" height="19" viewBox="0 0 10 19"><path d="M0.5 6 L4.5 0.5 L8.5 6Z M0.5 11.5 L8.5 11.5 L4.5 17Z" fill="#666"/></svg>
<svg style="position:absolute;left:62px;top:142px;" width="15" height="13" viewBox="0 0 15 13"><path d="M1.5 1.5 L12.5 11.5 M12.5 1.5 L1.5 11.5" stroke="#c8c8c8" stroke-width="1.8"/></svg>
<svg style="position:absolute;left:94px;top:143px;" width="17" height="12" viewBox="0 0 17 12"><path d="M1.5 6 L6 10.5 L15.5 1.5" fill="none" stroke="#c8c8c8" stroke-width="1.8"/></svg>
<div class="t" style="left:130.00px;top:142.00px;font-size:17px;line-height:17px;color:#222;font-style:italic;font-family:'Liberation Serif',serif;">fx</div>
<div style="left:155px;top:141px;width:1px;height:16px;background:#dcdcdc;"></div>
<div style="left:0px;top:165px;width:1445px;height:26px;background:#f7f7f7;"></div>
<div style="left:348px;top:165px;width:100px;height:26px;background:#e3e3e3;"></div>
<div style="left:348px;top:188px;width:100px;height:3px;background:#1e7145;"></div>
<div style="left:5.5px;top:166px;width:1px;height:24px;background:#dadada;"></div>
<div style="left:20.5px;top:166px;width:1px;height:24px;background:#dadada;"></div>
<div class="t" style="left:9.33px;top:173.00px;font-size:11px;line-height:11px;color:#555;">B</div>
<div style="left:149.5px;top:166px;width:1px;height:24px;background:#dadada;"></div>
<div class="t" style="left:81.03px;top:173.00px;font-size:11px;line-height:11px;color:#555;">C</div>
<div style="left:248.5px;top:166px;width:1px;height:24px;background:#dadada;"></div>
<div class="t" style="left:195.03px;top:173.00px;font-size:11px;line-height:11px;color:#555;">D</div>
<div style="left:348px;top:166px;width:1px;height:24px;background:#dadada;"></div>
<div class="t" style="left:294.58px;top:173.00px;font-size:11px;line-height:11px;color:#555;">E</div>
<div style="left:448px;top:166px;width:1px;height:24px;background:#dadada;"></div>
<div class="t" style="left:394.64px;top:173.00px;font-size:11px;line-height:11px;color:#1e7145;">F</div>
<div style="left:463px;top:166px;width:1px;height:24px;background:#dadada;"></div>
<div class="t" style="left:451.22px;top:173.00px;font-size:11px;line-height:11px;color:#555;">G</div>
<div style="left:591.5px;top:166px;width:1px;height:24px;background:#dadada;"></div>
<div class="t" style="left:523.28px;top:173.00px;font-size:11px;line-height:11px;color:#555;">H</div>
<div style="left:690.5px;top:166px;width:1px;height:24px;background:#dadada;"></div>
<div class="t" style="left:639.47px;top:173.00px;font-size:11px;line-height:11px;color:#555;">I</div>
<div style="left:790px;top:166px;width:1px;height:24px;background:#dadada;"></div>
<div class="t" style="left:737.50px;top:173.00px;font-size:11px;line-height:11px;color:#555;">J</div>
<div style="left:889.5px;top:166px;width:1px;height:24px;background:#dadada;"></div>
<div class="t" style="left:836.08px;top:173.00px;font-size:11px;line-height:11px;color:#555;">K</div>
<div style="left:905.5px;top:166px;width:1px;height:24px;background:#dadada;"></div>
<div class="t" style="left:894.44px;top:173.00px;font-size:11px;line-height:11px;color:#555;">L</div>
<div style="left:1034.5px;top:166px;width:1px;height:24px;background:#dadada;"></div>
<div class="t" style="left:965.42px;top:173.00px;font-size:11px;line-height:11px;color:#555;">M</div>
<div style="left:1133.5px;top:166px;width:1px;height:24px;background:#dadada;"></div>
<div class="t" style="left:1080.03px;top:173.00px;font-size:11px;line-height:11px;color:#555;">N</div>
<div style="left:1233px;top:166px;width:1px;height:24px;background:#dadada;"></div>
<div class="t" style="left:1178.97px;top:173.00px;font-size:11px;line-height:11px;color:#555;">O</div>
<div style="left:1332.5px;top:166px;width:1px;height:24px;background:#dadada;"></div>
<div class="t" style="left:1279.08px;top:173.00px;font-size:11px;line-height:11px;color:#555;">P</div>
<div style="left:1374px;top:166px;width:1px;height:24px;background:#dadada;"></div>
<div class="t" style="left:1348.97px;top:173.00px;font-size:11px;line-height:11px;color:#555;">Q</div>
<div style="left:1474px;top:166px;width:1px;height:24px;background:#dadada;"></div>
<div class="t" style="left:1420.03px;top:173.00px;font-size:11px;line-height:11px;color:#555;">R</div>
<div style="left:0px;top:191px;width:1445px;height:150px;background:#000;"></div>
<div class="t" style="left:24.90px;top:229.00px;font-size:20.3px;line-height:20.3px;color:#fff;font-weight:bold;-webkit-text-stroke:0.5px #fff;letter-spacing:0.141px;">MIS FINANZAS</div>
<svg style="position:absolute;left:18px;top:259px;" width="64" height="64" viewBox="0 0 64 64"><g fill="none" stroke="#fff" stroke-width="1.2" stroke-linejoin="round" stroke-linecap="round"><path d="M24.5 20.5 L21 11 C25 8.5 31 8.5 35 11 L31.5 20.5"/><path d="M24.5 20.5 C14 24 10.5 35 11 44 C11.5 54 17 59.5 27 59.5 C34 59.5 40 59 43 57"/><path d="M31.5 20.5 C39 22.5 44.5 29 45.5 36"/><path d="M44.5 36.5 C44.5 35 59.5 35 59.5 36.5 V59.5 H44.5 Z"/><path d="M46.5 40 H57.5 M46.5 43.2 H57.5 M46.5 46.4 H57.5 M46.5 49.6 H57.5 M46.5 52.8 H57.5 M46.5 56 H57.5"/><path d="M42 59.8 H61"/><path d="M40.9 3 L43 6.5 L40.9 10 L38.8 6.5Z"/><path d="M55.8 25.3 L57.9 28.8 L55.8 32.3 L53.7 28.8Z" transform="rotate(20 55.8 28.8)"/><path d="M5.7 31.1 L7.8 34.6 L5.7 38.1 L3.6 34.6Z" transform="rotate(-15 5.7 34.6)"/><path d="M34.5 34 C33 31 26 30.5 24.5 34 C23 38 34 39 34.5 43 C35 47 26 48 23.5 44.5"/><path d="M29.5 29.5 V49.5"/></g></svg>
<div style="left:203px;top:207.5px;width:124px;height:124px;background:radial-gradient(ellipse at 62% 30%,#1e1e1e 0%,#131313 45%,#0b0b0b 100%)"></div>
<svg style="position:absolute;left:203px;top:207px;" width="124" height="124" viewBox="0 0 124 124"><defs><linearGradient id="gd" x1="0" y1="0" x2="1" y2="1"><stop offset="0" stop-color="#c9a45a"/><stop offset="0.5" stop-color="#a8823f"/><stop offset="1" stop-color="#8a6a30"/></linearGradient></defs><defs><radialGradient id="lion" cx="0.5" cy="0.5" r="0.5"><stop offset="0" stop-color="#2e2e2e"/><stop offset="0.6" stop-color="#222" stop-opacity="0.7"/><stop offset="1" stop-color="#111" stop-opacity="0"/></radialGradient></defs><ellipse cx="70" cy="38" rx="30" ry="36" fill="url(#lion)"/><path d="M43.6 19.6 L62.4 37.5 L81.4 19.2 L81.4 47 L74 54.5 L74 33 L62.4 44.6 L51 33 L51 50.5 L43.6 43.5 Z" fill="url(#gd)"/><path d="M53.5 41 L58.6 46 L58.6 59.6 L53.5 54.6 Z M66 47.5 L73.6 40.5 L73.6 48.5 L66 55.5 Z" fill="url(#gd)"/><text x="62" y="76" font-size="13.8" text-anchor="middle" fill="#a88647" stroke="#a88647" stroke-width="0.35" font-family="Liberation Sans" letter-spacing="0.1">MOMENTUM</text><text x="62" y="90.5" font-size="15" text-anchor="middle" fill="#a88647" stroke="#a88647" stroke-width="0.35" font-family="Liberation Sans" letter-spacing="0.8">LATINO</text><text x="62" y="103.5" font-size="9.5" font-weight="bold" text-anchor="middle" fill="#94763d" font-family="Liberation Sans" letter-spacing="2">HGW</text></svg>
<div style="left:346.5px;top:260px;width:103px;height:63px;border:2px solid #1f7a45"></div>
<div style="left:348.5px;top:262px;width:99px;height:59px;border:1px solid #fff"></div>
<div style="left:444px;top:317px;width:6px;height:6px;background:#1f7a45;outline:1px solid #fff"></div>
<div style="left:0px;top:341px;width:1374px;height:539px;background:#ebf9fb;"></div>
<div style="left:1374px;top:341px;width:71px;height:539px;background:#fff;"></div>
<div style="left:20px;top:369px;width:427px;height:25px;background:#024268;"></div>
<svg style="position:absolute;left:440px;top:369px;" width="7" height="7.5" viewBox="0 0 7 7.5"><path d="M0 0 L7 0 L7 7.5Z" fill="#f00"/></svg>
<div style="left:20px;top:394px;width:427px;height:69px;background:#fff;"></div>
<div style="left:20px;top:394px;width:427.5px;height:69px;border:1px solid #8a8a8a;border-top:1px solid #777"></div>
<div style="left:20px;top:428px;width:427px;height:1px;background:#8a8a8a;"></div>
<div class="t" style="left:118.80px;top:375.00px;font-size:13.4px;line-height:13.4px;color:#fff;font-weight:bold;-webkit-text-stroke:0.25px #fff;letter-spacing:0.241px;">Ingresos Totales esperados al mes</div>
<div class="t" style="left:200.35px;top:403.00px;font-size:15.5px;line-height:15.5px;color:#000;font-weight:bold;-webkit-text-stroke:0.3px #000;letter-spacing:1.045px;">$41,000</div>
<div style="left:21px;top:429px;width:425px;height:16px;background:#ebf9fb;"></div>
<div class="t" style="left:97.60px;top:432.00px;font-size:10.6px;line-height:10.6px;color:#053f68;font-weight:bold;-webkit-text-stroke:0.2px #053f68;letter-spacing:0.422px;">Ingresos fijos</div>
<div class="t" style="left:112.65px;top:450.00px;font-size:10.6px;line-height:10.6px;color:#111;font-style:italic;letter-spacing:0.997px;">$35,000</div>
<div class="t" style="left:297.60px;top:432.00px;font-size:10.6px;line-height:10.6px;color:#053f68;font-weight:bold;-webkit-text-stroke:0.2px #053f68;letter-spacing:0.489px;">Ingresos variables</div>
<div class="t" style="left:329.30px;top:450.00px;font-size:10.6px;line-height:10.6px;color:#111;font-style:italic;letter-spacing:1.116px;">$6,000</div>
<div style="left:462px;top:369px;width:427px;height:25px;background:#024268;"></div>
<svg style="position:absolute;left:882px;top:369px;" width="7" height="7.5" viewBox="0 0 7 7.5"><path d="M0 0 L7 0 L7 7.5Z" fill="#f00"/></svg>
<div style="left:462px;top:394px;width:427px;height:69px;background:#fff;"></div>
<div style="left:462px;top:394px;width:427.5px;height:69px;border:1px solid #8a8a8a;border-top:1px solid #777"></div>
<div style="left:462px;top:428px;width:427px;height:1px;background:#8a8a8a;"></div>
<div class="t" style="left:563.40px;top:375.00px;font-size:13.4px;line-height:13.4px;color:#fff;font-weight:bold;-webkit-text-stroke:0.25px #fff;letter-spacing:0.274px;">Total de Gastos esperados al mes</div>
<div class="t" style="left:643.05px;top:403.00px;font-size:15.5px;line-height:15.5px;color:#000;font-weight:bold;-webkit-text-stroke:0.3px #000;letter-spacing:0.812px;">$31,994</div>
<div style="left:463px;top:429px;width:425px;height:16px;background:#ebf9fb;"></div>
<div class="t" style="left:544.45px;top:432.00px;font-size:10.6px;line-height:10.6px;color:#053f68;font-weight:bold;-webkit-text-stroke:0.2px #053f68;letter-spacing:0.366px;">Gastos fijos</div>
<div class="t" style="left:575.04px;top:450.00px;font-size:10.6px;line-height:10.6px;color:#111;font-weight:bold;font-style:italic;">-</div>
<div class="t" style="left:744.10px;top:432.00px;font-size:10.6px;line-height:10.6px;color:#053f68;font-weight:bold;-webkit-text-stroke:0.2px #053f68;letter-spacing:0.503px;">Gastos variables</div>
<div class="t" style="left:769.50px;top:450.00px;font-size:10.6px;line-height:10.6px;color:#111;font-style:italic;letter-spacing:0.547px;">$31,994</div>
<div style="left:905px;top:369px;width:427px;height:25px;background:#024268;"></div>
<svg style="position:absolute;left:1325px;top:369px;" width="7" height="7.5" viewBox="0 0 7 7.5"><path d="M0 0 L7 0 L7 7.5Z" fill="#f00"/></svg>
<div style="left:905px;top:394px;width:427px;height:69px;background:#fff;"></div>
<div style="left:905px;top:394px;width:427.5px;height:69px;border:1px solid #8a8a8a;border-top:1px solid #777"></div>
<div style="left:905px;top:428px;width:427px;height:1px;background:#8a8a8a;"></div>
<div class="t" style="left:1033.05px;top:375.00px;font-size:13.4px;line-height:13.4px;color:#fff;font-weight:bold;-webkit-text-stroke:0.25px #fff;letter-spacing:0.254px;">Disponible al final de mes</div>
<div class="t" style="left:1089.20px;top:403.00px;font-size:15.5px;line-height:15.5px;color:#000;font-weight:bold;-webkit-text-stroke:0.3px #000;letter-spacing:1.438px;">$9,006</div>
<div style="left:906px;top:429px;width:425px;height:33px;background:#ebf9fb;"></div>
<svg style="position:absolute;left:907.5px;top:437.5px;" width="12" height="12" viewBox="0 0 12 12"><g transform="scale(1.043)"><path d="M2 5 C1 7 2.5 10.5 5.5 11 C8.5 11.5 10.5 9 10 6.5 L8 3 C7.5 2 6.5 2.5 7 3.5 L5 1.5 C4 1 3.5 2 4 2.5 Z" fill="#f0c030"/><path d="M1 2 L2 0.5 M3 1.5 L3.5 0" stroke="#999" stroke-width="0.5"/><path d="M9 1 L10 0 M10.5 2 L11.5 1.5" stroke="#999" stroke-width="0.5"/></g></svg>
<div style="left:905px;top:429px;width:427px;height:33px;overflow:hidden">
<div class="t" style="left:15.00px;top:11.00px;font-size:10.4px;line-height:10.4px;color:#053f68;font-weight:bold;-webkit-text-stroke:0.2px #053f68;letter-spacing:0.610px;">¡Felicidades!, tu disponible al final del mes es suficiente para lograr tus metas</div>
</div>
<div style="left:462px;top:479.5px;width:428px;height:274.5px;background:#fff"></div>
<div style="left:462.5px;top:480.5px;width:427px;height:16px;background:#024268;"></div>
<div class="t" style="left:466.00px;top:484.00px;font-size:10.6px;line-height:10.6px;color:#fff;font-weight:bold;-webkit-text-stroke:0.4px #fff;letter-spacing:0.454px;">Gastos Mensuales</div>
<div class="t" style="left:735.29px;top:484.00px;font-size:10.6px;line-height:10.6px;color:#fff;font-weight:bold;-webkit-text-stroke:0.4px #fff;">%</div>
<div class="t" style="left:854.00px;top:484.00px;font-size:10.6px;line-height:10.6px;color:#fff;font-weight:bold;-webkit-text-stroke:0.4px #fff;letter-spacing:0.054px;">Monto</div>
<svg style="position:absolute;left:465px;top:499.9px;" width="11.5" height="11.5" viewBox="0 0 11.5 11.5"><g transform="scale(1.000)"><ellipse cx="3.5" cy="4" rx="3.5" ry="3" fill="#4a9a3a"/><rect x="3" y="5.5" width="8" height="5.5" fill="#f2d8b0"/><path d="M2 6 L7 1.8 L12 6Z" fill="#c96a3a"/><rect x="5.5" y="8" width="2.5" height="3" fill="#8a5a3a"/><rect x="9" y="7" width="1.8" height="1.8" fill="#6ab0e0"/><ellipse cx="10.5" cy="10.5" rx="1.5" ry="1" fill="#4a9a3a"/></g></svg>
<div class="t" style="left:477.00px;top:501.00px;font-size:11.2px;line-height:11.2px;color:#000;-webkit-text-stroke:0.15px #000;letter-spacing:0.500px;">Casa</div>
<div class="t" style="left:723.22px;top:501.00px;font-size:11.2px;line-height:11.2px;color:#000;font-style:italic;-webkit-text-stroke:0.1px #000;letter-spacing:0.450px;">34.4%</div>
<div class="t" style="left:839.65px;top:501.00px;font-size:11.2px;line-height:11.2px;color:#000;-webkit-text-stroke:0.15px #000;letter-spacing:0.450px;">$11,000</div>
<svg style="position:absolute;left:465px;top:517.05px;" width="11.5" height="11.5" viewBox="0 0 11.5 11.5"><g transform="scale(1.000)"><ellipse cx="5.5" cy="6" rx="4" ry="5.5" transform="rotate(35 5.5 6)" fill="#7bb83a"/><ellipse cx="5.5" cy="6" rx="3" ry="4.3" transform="rotate(35 5.5 6)" fill="#e0ea8a"/><circle cx="4.8" cy="6.8" r="2" fill="#8a4a24"/></g></svg>
<div class="t" style="left:477.00px;top:519.00px;font-size:11.2px;line-height:11.2px;color:#000;-webkit-text-stroke:0.15px #000;letter-spacing:0.500px;">Comida</div>
<div class="t" style="left:723.22px;top:519.00px;font-size:11.2px;line-height:11.2px;color:#000;font-style:italic;-webkit-text-stroke:0.1px #000;letter-spacing:0.450px;">15.3%</div>
<div class="t" style="left:845.49px;top:519.00px;font-size:11.2px;line-height:11.2px;color:#000;-webkit-text-stroke:0.15px #000;letter-spacing:0.450px;">$4,880</div>
<svg style="position:absolute;left:465px;top:534.1999999999999px;" width="11.5" height="11.5" viewBox="0 0 11.5 11.5"><g transform="scale(1.000)"><path d="M5.5 10.5 C1 7 0 5 0.5 3 C1 1 3 0.5 4.5 1.5 L5.5 2.5 L6.5 1.5 C8 0.5 10 1 10.5 3 C11 5 10 7 5.5 10.5Z" fill="#e8202a"/></g></svg>
<div class="t" style="left:477.00px;top:536.00px;font-size:11.2px;line-height:11.2px;color:#000;-webkit-text-stroke:0.15px #000;letter-spacing:0.500px;">Familia</div>
<div class="t" style="left:723.22px;top:536.00px;font-size:11.2px;line-height:11.2px;color:#000;font-style:italic;-webkit-text-stroke:0.1px #000;letter-spacing:0.450px;">15.6%</div>
<div class="t" style="left:845.49px;top:536.00px;font-size:11.2px;line-height:11.2px;color:#000;-webkit-text-stroke:0.15px #000;letter-spacing:0.450px;">$5,000</div>
<svg style="position:absolute;left:465px;top:551.35px;" width="11.5" height="11.5" viewBox="0 0 11.5 11.5"><g transform="scale(1.000)"><rect x="4" y="2" width="3" height="2" fill="#5ab0e8"/><path d="M1 9 L1 6 C2 4 3 3.5 5 3.5 L7 3.5 C9 3.5 10 4.5 11 6 L11 9Z" fill="#444"/><rect x="2.5" y="5" width="7" height="2" fill="#ddd"/><circle cx="3" cy="9.5" r="1.5" fill="#222"/><circle cx="9" cy="9.5" r="1.5" fill="#222"/></g></svg>
<div class="t" style="left:477.00px;top:553.00px;font-size:11.2px;line-height:11.2px;color:#000;-webkit-text-stroke:0.15px #000;letter-spacing:0.500px;">Transporte</div>
<div class="t" style="left:726.56px;top:553.00px;font-size:11.2px;line-height:11.2px;color:#000;font-style:italic;-webkit-text-stroke:0.1px #000;letter-spacing:0.450px;">6.9%</div>
<div class="t" style="left:845.49px;top:553.00px;font-size:11.2px;line-height:11.2px;color:#000;-webkit-text-stroke:0.15px #000;letter-spacing:0.450px;">$2,200</div>
<svg style="position:absolute;left:465px;top:568.5px;" width="11.5" height="11.5" viewBox="0 0 11.5 11.5"><g transform="scale(1.000)"><path d="M1 1.5 L6 5 L9.5 2 C10.5 1 11.5 1.5 10.8 2.5 L7.5 6 L10.5 11 L9.5 11.5 L5.5 8 L3.5 10 L3.5 11 L2.5 11 L2 9 L0.5 8.5 L0.5 7.5 L2 7.5 L4.5 5.5 L0.5 2.5Z" fill="#5aaee0"/></g></svg>
<div class="t" style="left:477.00px;top:570.00px;font-size:11.2px;line-height:11.2px;color:#000;-webkit-text-stroke:0.15px #000;letter-spacing:0.500px;">Viajes</div>
<div class="t" style="left:726.56px;top:570.00px;font-size:11.2px;line-height:11.2px;color:#000;font-style:italic;-webkit-text-stroke:0.1px #000;letter-spacing:0.450px;">0.0%</div>
<div class="t" style="left:882.34px;top:570.00px;font-size:11px;line-height:11px;color:#111;font-weight:bold;">-</div>
<svg style="position:absolute;left:465px;top:585.65px;" width="11.5" height="11.5" viewBox="0 0 11.5 11.5"><g transform="scale(1.000)"><path d="M1 3.5 L5.5 0.5 L10 3.5Z" fill="#bbb"/><rect x="1" y="3.5" width="9" height="7.5" fill="#d6d0c0"/><circle cx="5.5" cy="5.5" r="1.8" fill="#e8c040"/><rect x="2" y="8" width="1.2" height="3" fill="#999"/><rect x="7.8" y="8" width="1.2" height="3" fill="#999"/><rect x="0.5" y="10.5" width="10" height="1" fill="#888"/></g></svg>
<div class="t" style="left:477.00px;top:587.00px;font-size:11.2px;line-height:11.2px;color:#000;-webkit-text-stroke:0.15px #000;letter-spacing:0.500px;">Deudas</div>
<div class="t" style="left:723.22px;top:587.00px;font-size:11.2px;line-height:11.2px;color:#000;font-style:italic;-webkit-text-stroke:0.1px #000;letter-spacing:0.450px;">12.5%</div>
<div class="t" style="left:845.49px;top:587.00px;font-size:11.2px;line-height:11.2px;color:#000;-webkit-text-stroke:0.15px #000;letter-spacing:0.450px;">$4,000</div>
<svg style="position:absolute;left:465px;top:602.8px;" width="11.5" height="11.5" viewBox="0 0 11.5 11.5"><g transform="scale(1.000)"><rect x="0.5" y="3.5" width="10.5" height="5.5" rx="1" fill="#f2f2f2" stroke="#aaa" stroke-width="0.5"/><rect x="0.5" y="6.3" width="10.5" height="1.2" fill="#e33"/><rect x="4" y="1.5" width="1.5" height="2" fill="#e33"/><rect x="6" y="1.5" width="1.5" height="2" fill="#38f"/><circle cx="3" cy="9.5" r="1.4" fill="#333"/><circle cx="8.5" cy="9.5" r="1.4" fill="#333"/></g></svg>
<div class="t" style="left:477.00px;top:604.00px;font-size:11.2px;line-height:11.2px;color:#000;-webkit-text-stroke:0.15px #000;letter-spacing:0.500px;">Salud</div>
<div class="t" style="left:726.56px;top:604.00px;font-size:11.2px;line-height:11.2px;color:#000;font-style:italic;-webkit-text-stroke:0.1px #000;letter-spacing:0.450px;">0.0%</div>
<div class="t" style="left:882.34px;top:604.00px;font-size:11px;line-height:11px;color:#111;font-weight:bold;">-</div>
<svg style="position:absolute;left:465px;top:619.9499999999999px;" width="11.5" height="11.5" viewBox="0 0 11.5 11.5"><g transform="scale(1.000)"><rect x="0.5" y="1" width="10.5" height="10" rx="1.5" fill="#8a6050"/><rect x="1.8" y="2.2" width="8" height="6.3" rx="1" fill="#3a3a3a"/><rect x="2.5" y="2.8" width="3.5" height="1.5" fill="#888"/><rect x="2" y="9.3" width="7.5" height="1" fill="#c9a890"/></g></svg>
<div class="t" style="left:477.00px;top:621.00px;font-size:11.2px;line-height:11.2px;color:#000;-webkit-text-stroke:0.15px #000;letter-spacing:0.500px;">Suscripciones</div>
<div class="t" style="left:726.56px;top:621.00px;font-size:11.2px;line-height:11.2px;color:#000;font-style:italic;-webkit-text-stroke:0.1px #000;letter-spacing:0.450px;">1.7%</div>
<div class="t" style="left:855.73px;top:621.00px;font-size:11.2px;line-height:11.2px;color:#000;-webkit-text-stroke:0.15px #000;letter-spacing:0.450px;">$547</div>
<svg style="position:absolute;left:465px;top:637.0999999999999px;" width="11.5" height="11.5" viewBox="0 0 11.5 11.5"><g transform="scale(1.000)"><path d="M1 3.5 L5.5 0.5 L10 3.5Z" fill="#bbb"/><rect x="1" y="3.5" width="9" height="7.5" fill="#d6d0c0"/><circle cx="5.5" cy="5.5" r="1.8" fill="#e8c040"/><rect x="2" y="8" width="1.2" height="3" fill="#999"/><rect x="7.8" y="8" width="1.2" height="3" fill="#999"/><rect x="0.5" y="10.5" width="10" height="1" fill="#888"/></g></svg>
<div class="t" style="left:477.00px;top:639.00px;font-size:11.2px;line-height:11.2px;color:#000;-webkit-text-stroke:0.15px #000;letter-spacing:0.500px;">Gastos anuales</div>
<div class="t" style="left:726.56px;top:639.00px;font-size:11.2px;line-height:11.2px;color:#000;font-style:italic;-webkit-text-stroke:0.1px #000;letter-spacing:0.450px;">5.2%</div>
<div class="t" style="left:845.49px;top:639.00px;font-size:11.2px;line-height:11.2px;color:#000;-webkit-text-stroke:0.15px #000;letter-spacing:0.450px;">$1,667</div>
<svg style="position:absolute;left:465px;top:654.25px;" width="11.5" height="11.5" viewBox="0 0 11.5 11.5"><g transform="scale(1.000)"><path d="M0.5 10 C1 7 3 5.5 5.5 5 L9 2.5 L10 4 L6.5 8 C5 10 3 11 0.5 10Z" fill="#f0b830"/><path d="M6 5.5 L10.5 0.8 L11.2 1.6 L7 6.5Z" fill="#e060b0"/><path d="M3 7 L7.5 3 M2 9 L6 5.5" stroke="#e8a020" stroke-width="0.6"/></g></svg>
<div class="t" style="left:477.00px;top:656.00px;font-size:11.2px;line-height:11.2px;color:#000;-webkit-text-stroke:0.15px #000;letter-spacing:0.500px;">Cuidado personal</div>
<div class="t" style="left:726.56px;top:656.00px;font-size:11.2px;line-height:11.2px;color:#000;font-style:italic;-webkit-text-stroke:0.1px #000;letter-spacing:0.450px;">0.0%</div>
<div class="t" style="left:882.34px;top:656.00px;font-size:11px;line-height:11px;color:#111;font-weight:bold;">-</div>
<svg style="position:absolute;left:465px;top:671.4px;" width="11.5" height="11.5" viewBox="0 0 11.5 11.5"><g transform="scale(1.000)"><circle cx="3.5" cy="2.5" r="2.2" fill="#888"/><circle cx="7.5" cy="2.5" r="2.2" fill="#888"/><rect x="1" y="5" width="8" height="5.5" rx="1" fill="#777"/><path d="M9 6 L11 5 L11 10 L9 9Z" fill="#555"/></g></svg>
<div class="t" style="left:477.00px;top:673.00px;font-size:11.2px;line-height:11.2px;color:#000;-webkit-text-stroke:0.15px #000;letter-spacing:0.500px;">Entretenimiento</div>
<div class="t" style="left:726.56px;top:673.00px;font-size:11.2px;line-height:11.2px;color:#000;font-style:italic;-webkit-text-stroke:0.1px #000;letter-spacing:0.450px;">0.0%</div>
<div class="t" style="left:882.34px;top:673.00px;font-size:11px;line-height:11px;color:#111;font-weight:bold;">-</div>
<svg style="position:absolute;left:465px;top:688.55px;" width="11.5" height="11.5" viewBox="0 0 11.5 11.5"><g transform="scale(1.000)"><ellipse cx="5.5" cy="6" rx="5.2" ry="2" fill="#8aa0a0" transform="rotate(-20 5.5 6)"/><ellipse cx="6" cy="4.3" rx="2.3" ry="1.5" fill="#a8d8e0" transform="rotate(-20 6 4.3)"/></g></svg>
<div class="t" style="left:477.00px;top:690.00px;font-size:11.2px;line-height:11.2px;color:#000;-webkit-text-stroke:0.15px #000;letter-spacing:0.500px;">Otros</div>
<div class="t" style="left:726.56px;top:690.00px;font-size:11.2px;line-height:11.2px;color:#000;font-style:italic;-webkit-text-stroke:0.1px #000;letter-spacing:0.450px;">8.4%</div>
<div class="t" style="left:845.49px;top:690.00px;font-size:11.2px;line-height:11.2px;color:#000;-webkit-text-stroke:0.15px #000;letter-spacing:0.450px;">$2,700</div>
<div style="left:463px;top:719px;width:426px;height:17px;background:#ebf9fb;"></div>
<div style="left:463px;top:736px;width:426px;height:1.5px;background:#8a8a8a;"></div>
<div class="t" style="left:466.00px;top:724.00px;font-size:10.9px;line-height:10.9px;color:#053f68;font-weight:bold;-webkit-text-stroke:0.3px #053f68;letter-spacing:0.450px;">Total de Gastos</div>
<div class="t" style="left:840.80px;top:723.00px;font-size:10.9px;line-height:10.9px;color:#053f68;font-weight:bold;-webkit-text-stroke:0.3px #053f68;letter-spacing:0.300px;">$31,994</div>
<div class="t" style="left:642.60px;top:741.00px;font-size:10.9px;line-height:10.9px;color:#111;font-style:italic;letter-spacing:0.685px;">Gastos anuales estimados</div>
<div class="t" style="left:832.00px;top:741.00px;font-size:10.9px;line-height:10.9px;color:#111;font-style:italic;letter-spacing:0.649px;">$383,924</div>
<div style="left:905px;top:479.5px;width:428px;height:120.5px;background:#fff"></div>
<div style="left:905.5px;top:480.5px;width:427px;height:16px;background:#024268;"></div>
<div class="t" style="left:908.30px;top:483.00px;font-size:10.6px;line-height:10.6px;color:#fff;font-weight:bold;-webkit-text-stroke:0.4px #fff;letter-spacing:0.520px;">Resumen de tus ahorros</div>
<div class="t" style="left:1186.20px;top:483.00px;font-size:10.6px;line-height:10.6px;color:#fff;font-weight:bold;-webkit-text-stroke:0.4px #fff;letter-spacing:0.555px;">Objetivo de ahorro al mes</div>
<svg style="position:absolute;left:907.5px;top:499.7px;" width="11.5" height="11.5" viewBox="0 0 11.5 11.5"><g transform="scale(1.000)"><ellipse cx="3.5" cy="4" rx="3.5" ry="3" fill="#4a9a3a"/><rect x="3" y="5.5" width="8" height="5.5" fill="#f2d8b0"/><path d="M2 6 L7 1.8 L12 6Z" fill="#c96a3a"/><rect x="5.5" y="8" width="2.5" height="3" fill="#8a5a3a"/><rect x="9" y="7" width="1.8" height="1.8" fill="#6ab0e0"/><ellipse cx="10.5" cy="10.5" rx="1.5" ry="1" fill="#4a9a3a"/></g></svg>
<div class="t" style="left:919.70px;top:501.00px;font-size:11.2px;line-height:11.2px;color:#000;-webkit-text-stroke:0.15px #000;letter-spacing:0.500px;">Casa</div>
<div class="t" style="left:1281.81px;top:501.00px;font-size:11.2px;line-height:11.2px;color:#000;-webkit-text-stroke:0.15px #000;letter-spacing:0.450px;">$19,371</div>
<svg style="position:absolute;left:907.5px;top:516.8px;" width="11.5" height="11.5" viewBox="0 0 11.5 11.5"><g transform="scale(1.000)"><path d="M0.5 4 L6 1.5 L11.5 4 L6 6.5Z" fill="#222"/><path d="M3 5.5 L3 8 C4.5 9 7.5 9 9 8 L9 5.5 L6 7Z" fill="#333"/><path d="M10.5 4.5 L10.5 8.5" stroke="#e8b030" stroke-width="0.8"/></g></svg>
<div class="t" style="left:919.70px;top:518.00px;font-size:11.2px;line-height:11.2px;color:#000;-webkit-text-stroke:0.15px #000;letter-spacing:0.500px;">Educación</div>
<div class="t" style="left:1288.49px;top:518.00px;font-size:11.2px;line-height:11.2px;color:#000;-webkit-text-stroke:0.15px #000;letter-spacing:0.450px;">$3,581</div>
<svg style="position:absolute;left:907.5px;top:533.9px;" width="11.5" height="11.5" viewBox="0 0 11.5 11.5"><g transform="scale(1.000)"><path d="M1 9 L1 6.5 L3 3.5 L8 3.5 L10.5 6.5 L10.5 9Z" fill="#e0302a"/><rect x="3.5" y="4.3" width="4" height="2" fill="#9ad0f0"/><circle cx="3" cy="9.3" r="1.5" fill="#333"/><circle cx="8.5" cy="9.3" r="1.5" fill="#333"/></g></svg>
<div class="t" style="left:919.70px;top:535.00px;font-size:11.2px;line-height:11.2px;color:#000;-webkit-text-stroke:0.15px #000;letter-spacing:0.500px;">Auto</div>
<div class="t" style="left:1326.34px;top:535.00px;font-size:11px;line-height:11px;color:#111;font-weight:bold;">-</div>
<svg style="position:absolute;left:907.5px;top:551.0px;" width="11.5" height="11.5" viewBox="0 0 11.5 11.5"><g transform="scale(1.000)"><rect x="1" y="1" width="9.5" height="9.5" rx="2" fill="#eee" stroke="#aaa" stroke-width="0.6"/><circle cx="3.5" cy="3.5" r="0.9" fill="#555"/><circle cx="5.75" cy="5.75" r="0.9" fill="#555"/><circle cx="8" cy="8" r="0.9" fill="#555"/></g></svg>
<div class="t" style="left:919.70px;top:553.00px;font-size:11.2px;line-height:11.2px;color:#000;-webkit-text-stroke:0.15px #000;letter-spacing:0.500px;">Otros</div>
<div class="t" style="left:1326.34px;top:553.00px;font-size:11px;line-height:11px;color:#111;font-weight:bold;">-</div>
<div style="left:906px;top:582.5px;width:426px;height:16.5px;background:#ebf9fb;"></div>
<div class="t" style="left:908.30px;top:587.00px;font-size:10.9px;line-height:10.9px;color:#053f68;font-weight:bold;-webkit-text-stroke:0.3px #053f68;letter-spacing:0.488px;">Total de objetivos de ahorro al mes</div>
<div class="t" style="left:1280.60px;top:587.00px;font-size:10.9px;line-height:10.9px;color:#053f68;font-weight:bold;-webkit-text-stroke:0.3px #053f68;letter-spacing:0.834px;">$22,952</div>
<div style="left:905px;top:616.5px;width:428px;height:137.5px;background:#fff"></div>
<div style="left:905.5px;top:617.5px;width:427px;height:16px;background:#024268;"></div>
<div style="left:1233px;top:617.5px;width:1px;height:16px;background:#888;"></div>
<div class="t" style="left:908.30px;top:621.00px;font-size:10.6px;line-height:10.6px;color:#fff;font-weight:bold;-webkit-text-stroke:0.4px #fff;letter-spacing:0.528px;">Resumen de tus deudas</div>
<div class="t" style="left:1254.00px;top:621.00px;font-size:10.6px;line-height:10.6px;color:#fff;font-weight:bold;-webkit-text-stroke:0.4px #fff;letter-spacing:0.787px;">Deuda Actual</div>
<svg style="position:absolute;left:907.5px;top:636.7px;" width="11.5" height="11.5" viewBox="0 0 11.5 11.5"><g transform="scale(1.000)"><ellipse cx="3.5" cy="4" rx="3.5" ry="3" fill="#4a9a3a"/><rect x="3" y="5.5" width="8" height="5.5" fill="#f2d8b0"/><path d="M2 6 L7 1.8 L12 6Z" fill="#c96a3a"/><rect x="5.5" y="8" width="2.5" height="3" fill="#8a5a3a"/><rect x="9" y="7" width="1.8" height="1.8" fill="#6ab0e0"/><ellipse cx="10.5" cy="10.5" rx="1.5" ry="1" fill="#4a9a3a"/></g></svg>
<div class="t" style="left:919.70px;top:638.00px;font-size:11.2px;line-height:11.2px;color:#000;-webkit-text-stroke:0.15px #000;letter-spacing:0.500px;">Hipoteca</div>
<div class="t" style="left:1275.14px;top:638.00px;font-size:11.2px;line-height:11.2px;color:#000;-webkit-text-stroke:0.15px #000;letter-spacing:0.450px;">$970,000</div>
<svg style="position:absolute;left:907.5px;top:653.8000000000001px;" width="11.5" height="11.5" viewBox="0 0 11.5 11.5"><g transform="scale(1.000)"><path d="M0.5 4 L6 1.5 L11.5 4 L6 6.5Z" fill="#222"/><path d="M3 5.5 L3 8 C4.5 9 7.5 9 9 8 L9 5.5 L6 7Z" fill="#333"/><path d="M10.5 4.5 L10.5 8.5" stroke="#e8b030" stroke-width="0.8"/></g></svg>
<div class="t" style="left:919.70px;top:655.00px;font-size:11.2px;line-height:11.2px;color:#000;-webkit-text-stroke:0.15px #000;letter-spacing:0.500px;">Educación</div>
<div class="t" style="left:1288.49px;top:655.00px;font-size:11.2px;line-height:11.2px;color:#000;-webkit-text-stroke:0.15px #000;letter-spacing:0.450px;">$8,000</div>
<div class="t" style="left:908.50px;top:672.00px;font-size:11px;line-height:11px;color:#111;font-weight:bold;">-</div>
<div class="t" style="left:1326.34px;top:672.00px;font-size:11px;line-height:11px;color:#111;font-weight:bold;">-</div>
<div class="t" style="left:908.50px;top:689.00px;font-size:11px;line-height:11px;color:#111;font-weight:bold;">-</div>
<div class="t" style="left:1326.34px;top:689.00px;font-size:11px;line-height:11px;color:#111;font-weight:bold;">-</div>
<div class="t" style="left:908.50px;top:707.00px;font-size:11px;line-height:11px;color:#111;font-weight:bold;">-</div>
<div class="t" style="left:1326.34px;top:707.00px;font-size:11px;line-height:11px;color:#111;font-weight:bold;">-</div>
<div style="left:906px;top:736.5px;width:426px;height:17px;background:#ebf9fb;"></div>
<div class="t" style="left:908.30px;top:741.00px;font-size:10.9px;line-height:10.9px;color:#053f68;font-weight:bold;-webkit-text-stroke:0.3px #053f68;letter-spacing:0.623px;">Total de Deuda Actual</div>
<div class="t" style="left:1273.80px;top:741.00px;font-size:10.9px;line-height:10.9px;color:#053f68;font-weight:bold;-webkit-text-stroke:0.3px #053f68;letter-spacing:0.820px;">$978,000</div>
<div style="left:462px;top:479.5px;width:428px;height:274.5px;border:1px solid #8a8a8a"></div>
<div style="left:905px;top:479.5px;width:428px;height:120.5px;border:1px solid #8a8a8a"></div>
<div style="left:905px;top:616.5px;width:428px;height:137.5px;border:1px solid #8a8a8a"></div>
<div style="left:23px;top:476px;width:367px;height:272px;border:1px solid #c4c4c4;border-radius:10px"></div>
<svg style="position:absolute;left:20px;top:500px;" width="250" height="230" viewBox="0 0 250 230"><path d="M122.30 4.90 A106.5 106.5 0 0 1 210.76 170.71 L166.74 141.19 A53.5 53.5 0 0 0 122.30 57.90Z" fill="#0f62e3"/><path d="M210.76 170.71 A106.5 106.5 0 0 1 124.31 217.88 L123.31 164.89 A53.5 53.5 0 0 0 166.74 141.19Z" fill="#fdb05a"/><path d="M124.31 217.88 A106.5 106.5 0 0 1 34.98 172.36 L78.43 142.03 A53.5 53.5 0 0 0 123.31 164.89Z" fill="#fd5555"/><path d="M34.98 172.36 A106.5 106.5 0 0 1 17.44 130.04 L69.63 120.76 A53.5 53.5 0 0 0 78.43 142.03Z" fill="#feeadb"/><path d="M17.44 130.04 A106.5 106.5 0 0 1 34.98 50.44 L78.43 80.77 A53.5 53.5 0 0 0 69.63 120.76Z" fill="#5a95b0"/><path d="M34.98 50.44 A106.5 106.5 0 0 1 41.97 41.47 L81.95 76.27 A53.5 53.5 0 0 0 78.43 80.77Z" fill="#e3fac6"/><path d="M41.97 41.47 A106.5 106.5 0 0 1 68.66 19.39 L95.36 65.18 A53.5 53.5 0 0 0 81.95 76.27Z" fill="#063f62"/><path d="M68.66 19.39 A106.5 106.5 0 0 1 122.30 4.90 L122.30 57.90 A53.5 53.5 0 0 0 95.36 65.18Z" fill="#04d4a2"/></svg>
<div style="left:267px;top:496.6px;width:6.5px;height:6.5px;background:#0f62e3;"></div>
<svg style="position:absolute;left:276.5px;top:492.6px;" width="11" height="11" viewBox="0 0 11 11"><g transform="scale(0.957)"><ellipse cx="3.5" cy="4" rx="3.5" ry="3" fill="#4a9a3a"/><rect x="3" y="5.5" width="8" height="5.5" fill="#f2d8b0"/><path d="M2 6 L7 1.8 L12 6Z" fill="#c96a3a"/><rect x="5.5" y="8" width="2.5" height="3" fill="#8a5a3a"/><rect x="9" y="7" width="1.8" height="1.8" fill="#6ab0e0"/><ellipse cx="10.5" cy="10.5" rx="1.5" ry="1" fill="#4a9a3a"/></g></svg>
<div class="t" style="left:288.00px;top:494.00px;font-size:10.6px;line-height:10.6px;color:#111;font-weight:bold;">Casa</div>
<div style="left:267px;top:517.02px;width:6.5px;height:6.5px;background:#fdb05a;"></div>
<svg style="position:absolute;left:276.5px;top:513.02px;" width="11" height="11" viewBox="0 0 11 11"><g transform="scale(0.957)"><ellipse cx="5.5" cy="6" rx="4" ry="5.5" transform="rotate(35 5.5 6)" fill="#7bb83a"/><ellipse cx="5.5" cy="6" rx="3" ry="4.3" transform="rotate(35 5.5 6)" fill="#e0ea8a"/><circle cx="4.8" cy="6.8" r="2" fill="#8a4a24"/></g></svg>
<div class="t" style="left:288.00px;top:515.00px;font-size:10.6px;line-height:10.6px;color:#111;font-weight:bold;">Comida</div>
<div style="left:267px;top:537.44px;width:6.5px;height:6.5px;background:#fd5555;"></div>
<svg style="position:absolute;left:276.5px;top:533.44px;" width="11" height="11" viewBox="0 0 11 11"><g transform="scale(0.957)"><path d="M5.5 10.5 C1 7 0 5 0.5 3 C1 1 3 0.5 4.5 1.5 L5.5 2.5 L6.5 1.5 C8 0.5 10 1 10.5 3 C11 5 10 7 5.5 10.5Z" fill="#e8202a"/></g></svg>
<div class="t" style="left:288.00px;top:535.00px;font-size:10.6px;line-height:10.6px;color:#111;font-weight:bold;">Familia</div>
<div style="left:267px;top:557.86px;width:6.5px;height:6.5px;background:#feeadb;"></div>
<svg style="position:absolute;left:276.5px;top:553.86px;" width="11" height="11" viewBox="0 0 11 11"><g transform="scale(0.957)"><rect x="4" y="2" width="3" height="2" fill="#5ab0e8"/><path d="M1 9 L1 6 C2 4 3 3.5 5 3.5 L7 3.5 C9 3.5 10 4.5 11 6 L11 9Z" fill="#444"/><rect x="2.5" y="5" width="7" height="2" fill="#ddd"/><circle cx="3" cy="9.5" r="1.5" fill="#222"/><circle cx="9" cy="9.5" r="1.5" fill="#222"/></g></svg>
<div class="t" style="left:288.00px;top:555.00px;font-size:10.6px;line-height:10.6px;color:#111;font-weight:bold;">Transporte</div>
<div style="left:267px;top:578.28px;width:6.5px;height:6.5px;background:#5ddcf0;"></div>
<svg style="position:absolute;left:276.5px;top:574.28px;" width="11" height="11" viewBox="0 0 11 11"><g transform="scale(0.957)"><path d="M1 1.5 L6 5 L9.5 2 C10.5 1 11.5 1.5 10.8 2.5 L7.5 6 L10.5 11 L9.5 11.5 L5.5 8 L3.5 10 L3.5 11 L2.5 11 L2 9 L0.5 8.5 L0.5 7.5 L2 7.5 L4.5 5.5 L0.5 2.5Z" fill="#5aaee0"/></g></svg>
<div class="t" style="left:288.00px;top:576.00px;font-size:10.6px;line-height:10.6px;color:#111;font-weight:bold;">Viajes</div>
<div style="left:267px;top:598.7px;width:6.5px;height:6.5px;background:#5a95b0;"></div>
<svg style="position:absolute;left:276.5px;top:594.7px;" width="11" height="11" viewBox="0 0 11 11"><g transform="scale(0.957)"><path d="M1 3.5 L5.5 0.5 L10 3.5Z" fill="#bbb"/><rect x="1" y="3.5" width="9" height="7.5" fill="#d6d0c0"/><circle cx="5.5" cy="5.5" r="1.8" fill="#e8c040"/><rect x="2" y="8" width="1.2" height="3" fill="#999"/><rect x="7.8" y="8" width="1.2" height="3" fill="#999"/><rect x="0.5" y="10.5" width="10" height="1" fill="#888"/></g></svg>
<div class="t" style="left:288.00px;top:596.00px;font-size:10.6px;line-height:10.6px;color:#111;font-weight:bold;">Deudas</div>
<div style="left:267px;top:619.12px;width:6.5px;height:6.5px;background:#8a6cf0;"></div>
<svg style="position:absolute;left:276.5px;top:615.12px;" width="11" height="11" viewBox="0 0 11 11"><g transform="scale(0.957)"><rect x="0.5" y="3.5" width="10.5" height="5.5" rx="1" fill="#f2f2f2" stroke="#aaa" stroke-width="0.5"/><rect x="0.5" y="6.3" width="10.5" height="1.2" fill="#e33"/><rect x="4" y="1.5" width="1.5" height="2" fill="#e33"/><rect x="6" y="1.5" width="1.5" height="2" fill="#38f"/><circle cx="3" cy="9.5" r="1.4" fill="#333"/><circle cx="8.5" cy="9.5" r="1.4" fill="#333"/></g></svg>
<div class="t" style="left:288.00px;top:617.00px;font-size:10.6px;line-height:10.6px;color:#111;font-weight:bold;">Salud</div>
<div style="left:267px;top:639.54px;width:6.5px;height:6.5px;background:#e3fac6;"></div>
<svg style="position:absolute;left:276.5px;top:635.54px;" width="11" height="11" viewBox="0 0 11 11"><g transform="scale(0.957)"><rect x="0.5" y="1" width="10.5" height="10" rx="1.5" fill="#8a6050"/><rect x="1.8" y="2.2" width="8" height="6.3" rx="1" fill="#3a3a3a"/><rect x="2.5" y="2.8" width="3.5" height="1.5" fill="#888"/><rect x="2" y="9.3" width="7.5" height="1" fill="#c9a890"/></g></svg>
<div class="t" style="left:288.00px;top:637.00px;font-size:10.6px;line-height:10.6px;color:#111;font-weight:bold;">Suscripciones</div>
<div style="left:267px;top:659.96px;width:6.5px;height:6.5px;background:#063f62;"></div>
<svg style="position:absolute;left:276.5px;top:655.96px;" width="11" height="11" viewBox="0 0 11 11"><g transform="scale(0.957)"><path d="M1 3.5 L5.5 0.5 L10 3.5Z" fill="#bbb"/><rect x="1" y="3.5" width="9" height="7.5" fill="#d6d0c0"/><circle cx="5.5" cy="5.5" r="1.8" fill="#e8c040"/><rect x="2" y="8" width="1.2" height="3" fill="#999"/><rect x="7.8" y="8" width="1.2" height="3" fill="#999"/><rect x="0.5" y="10.5" width="10" height="1" fill="#888"/></g></svg>
<div class="t" style="left:288.00px;top:657.00px;font-size:10.6px;line-height:10.6px;color:#111;font-weight:bold;">Gastos anuales</div>
<div style="left:267px;top:680.3800000000001px;width:6.5px;height:6.5px;background:#d8cdf8;"></div>
<svg style="position:absolute;left:276.5px;top:676.3800000000001px;" width="11" height="11" viewBox="0 0 11 11"><g transform="scale(0.957)"><path d="M0.5 10 C1 7 3 5.5 5.5 5 L9 2.5 L10 4 L6.5 8 C5 10 3 11 0.5 10Z" fill="#f0b830"/><path d="M6 5.5 L10.5 0.8 L11.2 1.6 L7 6.5Z" fill="#e060b0"/><path d="M3 7 L7.5 3 M2 9 L6 5.5" stroke="#e8a020" stroke-width="0.6"/></g></svg>
<div class="t" style="left:288.00px;top:678.00px;font-size:10.6px;line-height:10.6px;color:#111;font-weight:bold;">Cuidado personal</div>
<div style="left:267px;top:700.8000000000001px;width:6.5px;height:6.5px;background:#fde35c;"></div>
<svg style="position:absolute;left:276.5px;top:696.8000000000001px;" width="11" height="11" viewBox="0 0 11 11"><g transform="scale(0.957)"><circle cx="3.5" cy="2.5" r="2.2" fill="#888"/><circle cx="7.5" cy="2.5" r="2.2" fill="#888"/><rect x="1" y="5" width="8" height="5.5" rx="1" fill="#777"/><path d="M9 6 L11 5 L11 10 L9 9Z" fill="#555"/></g></svg>
<div class="t" style="left:288.00px;top:698.00px;font-size:10.6px;line-height:10.6px;color:#111;font-weight:bold;">Entretenimiento</div>
<div style="left:267px;top:721.22px;width:6.5px;height:6.5px;background:#04d4a2;"></div>
<svg style="position:absolute;left:276.5px;top:717.22px;" width="11" height="11" viewBox="0 0 11 11"><g transform="scale(0.957)"><ellipse cx="5.5" cy="6" rx="5.2" ry="2" fill="#8aa0a0" transform="rotate(-20 5.5 6)"/><ellipse cx="6" cy="4.3" rx="2.3" ry="1.5" fill="#a8d8e0" transform="rotate(-20 6 4.3)"/></g></svg>
<div class="t" style="left:288.00px;top:719.00px;font-size:10.6px;line-height:10.6px;color:#111;font-weight:bold;">Otros</div>
<div style="left:20px;top:770.5px;width:1312px;height:110px;background:#fff;"></div>
<div style="left:23px;top:771px;width:1132px;height:160px;border:1px solid #c4c4c4;border-radius:12px"></div>
<div class="t" style="left:531.45px;top:781.00px;font-size:11.6px;line-height:11.6px;color:#000;-webkit-text-stroke:0.2px #000;letter-spacing:-0.103px;">Tus gastos mes a mes</div>
<div style="left:112px;top:807.1px;width:1031px;height:1px;background:#d9d9d9;"></div>
<div class="t" style="left:55.12px;top:803.00px;font-size:11.8px;line-height:11.8px;color:#000;-webkit-text-stroke:0.2px #000;letter-spacing:-0.350px;">$ 12,000</div>
<div style="left:112px;top:838.3px;width:1031px;height:1px;background:#d9d9d9;"></div>
<div class="t" style="left:55.12px;top:834.00px;font-size:11.8px;line-height:11.8px;color:#000;-webkit-text-stroke:0.2px #000;letter-spacing:-0.350px;">$ 10,000</div>
<div style="left:112px;top:869.8px;width:1031px;height:1px;background:#d9d9d9;"></div>
<div class="t" style="left:61.33px;top:866.00px;font-size:11.8px;line-height:11.8px;color:#000;-webkit-text-stroke:0.2px #000;letter-spacing:-0.350px;">$ 8,000</div>
<div style="left:111.5px;top:807px;width:1px;height:75px;background:#888;"></div>
<div style="left:223.4px;top:854.8px;width:34.99999999999997px;height:30.200000000000045px;border:1.6px solid #111;border-radius:2px;background:#111;overflow:hidden"><div style="left:0;top:-1.6px;width:100%;height:17.500000000000068px;background:#04d4a2;position:absolute"></div><div style="left:0;top:17.500000000000068px;width:100%;height:2.7999999999999776px;background:#f4f7c0;position:absolute"></div><div style="left:0;top:21.900000000000045px;width:100%;height:10.899999999999999px;background:#8a6cf0;position:absolute"></div></div>
<div style="left:309.3px;top:842.1px;width:34.30000000000001px;height:42.89999999999998px;border:1.6px solid #111;border-radius:2px;background:#111;overflow:hidden"><div style="left:0;top:-1.6px;width:100%;height:3.300000000000023px;background:#f6f5b8;position:absolute"></div><div style="left:0;top:3.300000000000023px;width:100%;height:4.499999999999909px;background:#5ddcf0;position:absolute"></div><div style="left:0;top:9.399999999999933px;width:100%;height:5.500000000000023px;background:#feeadb;position:absolute"></div><div style="left:0;top:16.499999999999954px;width:100%;height:29.00000000000002px;background:#fdb05a;position:absolute"></div></div>
<div style="left:394.6px;top:855.4px;width:35.0px;height:29.600000000000023px;border:1.6px solid #111;border-radius:2px;background:#111;overflow:hidden"><div style="left:0;top:-1.6px;width:100%;height:13.400000000000045px;background:#cfc5fa;position:absolute"></div><div style="left:0;top:13.400000000000047px;width:100%;height:5.500000000000023px;background:#feeadb;position:absolute"></div><div style="left:0;top:20.500000000000068px;width:100%;height:11.699999999999953px;background:#fdb05a;position:absolute"></div></div>
<div style="left:481px;top:863.2px;width:34.799999999999955px;height:21.799999999999955px;border:1.6px solid #111;border-radius:2px;background:#111;overflow:hidden"><div style="left:0;top:-1.6px;width:100%;height:5.999999999999955px;background:#fde35c;position:absolute"></div><div style="left:0;top:5.999999999999955px;width:100%;height:5.100000000000046px;background:#feeadb;position:absolute"></div><div style="left:0;top:12.700000000000001px;width:100%;height:11.699999999999953px;background:#fdb05a;position:absolute"></div></div>
<div style="left:566.3px;top:873.8px;width:35.40000000000009px;height:11.200000000000045px;border:1.6px solid #111;border-radius:2px;background:#111;overflow:hidden"><div style="left:0;top:-1.6px;width:100%;height:15.400000000000045px;background:#feeadb;position:absolute"></div></div>
<div style="left:652.2px;top:848.8px;width:35.39999999999998px;height:36.200000000000045px;border:1.6px solid #111;border-radius:2px;background:#111;overflow:hidden"><div style="left:0;top:-1.6px;width:100%;height:6.7px;background:#feeadb;position:absolute"></div><div style="left:0;top:6.7px;width:100%;height:14.80000000000009px;background:#fd5555;position:absolute"></div><div style="left:0;top:23.10000000000009px;width:100%;height:15.699999999999953px;background:#fdb05a;position:absolute"></div></div>
<div style="left:738.3px;top:828.4px;width:35.0px;height:56.60000000000002px;border:1.6px solid #111;border-radius:2px;background:#111;overflow:hidden"><div style="left:0;top:-1.6px;width:100%;height:36.300000000000026px;background:#5ddcf0;position:absolute"></div><div style="left:0;top:36.30000000000002px;width:100%;height:5.600000000000046px;background:#feeadb;position:absolute"></div><div style="left:0;top:43.500000000000064px;width:100%;height:15.699999999999953px;background:#fdb05a;position:absolute"></div></div>
<div style="left:0px;top:880px;width:1445px;height:30px;background:linear-gradient(#f2f2f2,#e9e9e9);"></div>
<div style="left:0px;top:880px;width:1445px;height:1px;background:#d6d6d6;"></div>
<div style="left:0px;top:909px;width:1445px;height:1.5px;background:#bdbdbd;"></div>
<div class="t" style="left:-3.00px;top:888.00px;font-size:13px;line-height:13px;color:#666;">-</div>
<div style="left:18.4px;top:884px;width:1px;height:22px;background:#cfcfcf;"></div>
<div style="left:353.7px;top:884px;width:1px;height:22px;background:#cfcfcf;"></div>
<div style="left:501.5px;top:884px;width:1px;height:22px;background:#cfcfcf;"></div>
<div style="left:592px;top:884px;width:1px;height:22px;background:#cfcfcf;"></div>
<div style="left:699.4px;top:884px;width:1px;height:22px;background:#cfcfcf;"></div>
<div style="left:790px;top:884px;width:1px;height:22px;background:#cfcfcf;"></div>
<div style="left:879.5px;top:884px;width:1px;height:22px;background:#cfcfcf;"></div>
<div style="left:970px;top:884px;width:1px;height:22px;background:#cfcfcf;"></div>
<div style="left:1060.8px;top:884px;width:1px;height:22px;background:#cfcfcf;"></div>
<div style="left:1150.9px;top:884px;width:1px;height:22px;background:#cfcfcf;"></div>
<div style="left:1241.5px;top:884px;width:1px;height:22px;background:#cfcfcf;"></div>
<div style="left:1331px;top:884px;width:1px;height:22px;background:#cfcfcf;"></div>
<div style="left:1421.6px;top:884px;width:1px;height:22px;background:#cfcfcf;"></div>
<div style="left:108.5px;top:879px;width:125.5px;height:27px;background:#fff;border:1px solid #d2d2d2;border-top:none;border-radius:0 0 5px 5px;box-shadow:0 1px 1.5px rgba(0,0,0,0.15)"></div>
<div class="t" style="left:46.00px;top:889.00px;font-size:13.8px;line-height:13.8px;color:#555;letter-spacing:0.397px;">Inicio</div>
<div class="t" style="left:128.75px;top:889.00px;font-size:13.8px;line-height:13.8px;color:#1f7b45;font-weight:bold;letter-spacing:-0.108px;">Mis Finanzas</div>
<div class="t" style="left:254.10px;top:889.00px;font-size:13.8px;line-height:13.8px;color:#555;letter-spacing:0.172px;">Presupuesto</div>
<div class="t" style="left:375.00px;top:889.00px;font-size:13.8px;line-height:13.8px;color:#555;letter-spacing:0.267px;">Metas de Ahorro</div>
<div class="t" style="left:522.50px;top:889.00px;font-size:13.8px;line-height:13.8px;color:#555;letter-spacing:0.087px;">Deudas</div>
<div class="t" style="left:611.55px;top:889.00px;font-size:13.8px;line-height:13.8px;color:#555;letter-spacing:0.282px;">Patrimonio</div>
<div class="t" style="left:736.93px;top:889.00px;font-size:13.8px;line-height:13.8px;color:#555;">01</div>
<div class="t" style="left:827.23px;top:889.00px;font-size:13.8px;line-height:13.8px;color:#555;">02</div>
<div class="t" style="left:917.53px;top:889.00px;font-size:13.8px;line-height:13.8px;color:#555;">03</div>
<div class="t" style="left:1007.83px;top:889.00px;font-size:13.8px;line-height:13.8px;color:#555;">04</div>
<div class="t" style="left:1098.12px;top:889.00px;font-size:13.8px;line-height:13.8px;color:#555;">05</div>
<div class="t" style="left:1188.42px;top:889.00px;font-size:13.8px;line-height:13.8px;color:#555;">06</div>
<div class="t" style="left:1278.73px;top:889.00px;font-size:13.8px;line-height:13.8px;color:#555;">07</div>
<div class="t" style="left:1369.03px;top:889.00px;font-size:13.8px;line-height:13.8px;color:#555;">08</div>
<div style="left:0px;top:910.5px;width:1445px;height:25px;background:linear-gradient(#d9d9d9,#c9c9c9);"></div>
<div class="t" style="left:-1.00px;top:917.00px;font-size:13.4px;line-height:13.4px;color:#444;">o</div>
<div style="left:137.3px;top:878.3px;width:34.7px;height:2px;background:#9a9a9a;"></div>
<svg style="position:absolute;left:29px;top:913px;" width="21" height="21" viewBox="0 0 21 21"><g fill="none" stroke="#555" stroke-width="1.3" stroke-linecap="round" stroke-linejoin="round"><circle cx="9.5" cy="3.2" r="2.3"/><path d="M2 7 C5 8 7 8.5 9.5 8.5 C12 8.5 14 8 17 7"/><path d="M7.5 8.5 V12 L4.5 19 M11.5 8.5 V12 L13 14.5"/></g><path d="M13.5 14.5 L19 20 M19 14.5 L13.5 20" stroke="#555" stroke-width="1.3"/></svg>
<div class="t" style="left:53.80px;top:917.00px;font-size:13.4px;line-height:13.4px;color:#3a3a3a;-webkit-text-stroke:0.1px #3a3a3a;letter-spacing:0.478px;">Accesibilidad: es necesario investigar</div>
<div style="left:1229.4px;top:910.5px;width:41.3px;height:24.5px;background:#a9a9a9;"></div>
<svg style="position:absolute;left:1240px;top:914px;" width="20" height="18" viewBox="0 0 20 18"><g fill="#fafafa"><rect x="1" y="1" width="5" height="4"/><rect x="7.5" y="1" width="5" height="4"/><rect x="14" y="1" width="5" height="4"/><rect x="1" y="6.8" width="5" height="4"/><rect x="7.5" y="6.8" width="5" height="4"/><rect x="14" y="6.8" width="5" height="4"/><rect x="1" y="12.6" width="5" height="4"/><rect x="7.5" y="12.6" width="5" height="4"/><rect x="14" y="12.6" width="5" height="4"/></g></svg>
<svg style="position:absolute;left:1281px;top:914px;" width="19" height="18" viewBox="0 0 19 18"><rect x="1" y="1" width="16.5" height="15.5" fill="none" stroke="#555" stroke-width="1.4"/><rect x="5" y="4" width="8.5" height="9.5" fill="none" stroke="#555" stroke-width="1.2"/><path d="M7 7 H11.5 M7 10 H11.5" stroke="#555"/></svg>
<svg style="position:absolute;left:1322px;top:914px;" width="19" height="18" viewBox="0 0 19 18"><path d="M1 1 H17.5 V16.5 H1Z M5 1 V7.5 H9 V1 M9 7.5 H17.5" fill="none" stroke="#555" stroke-width="1.4"/></svg>
<div style="left:1361px;top:922px;width:10px;height:2.5px;background:#555;"></div>
<div style="left:1379px;top:921px;width:66px;height:5px;border-radius:3px;background:#a3a3a3"></div>
<div style="left:1424px;top:913px;width:22px;height:22px;border-radius:50%;background:linear-gradient(#fdfdfd,#e6e6e6);border:1px solid #bcbcbc"></div>
</div></body></html>
